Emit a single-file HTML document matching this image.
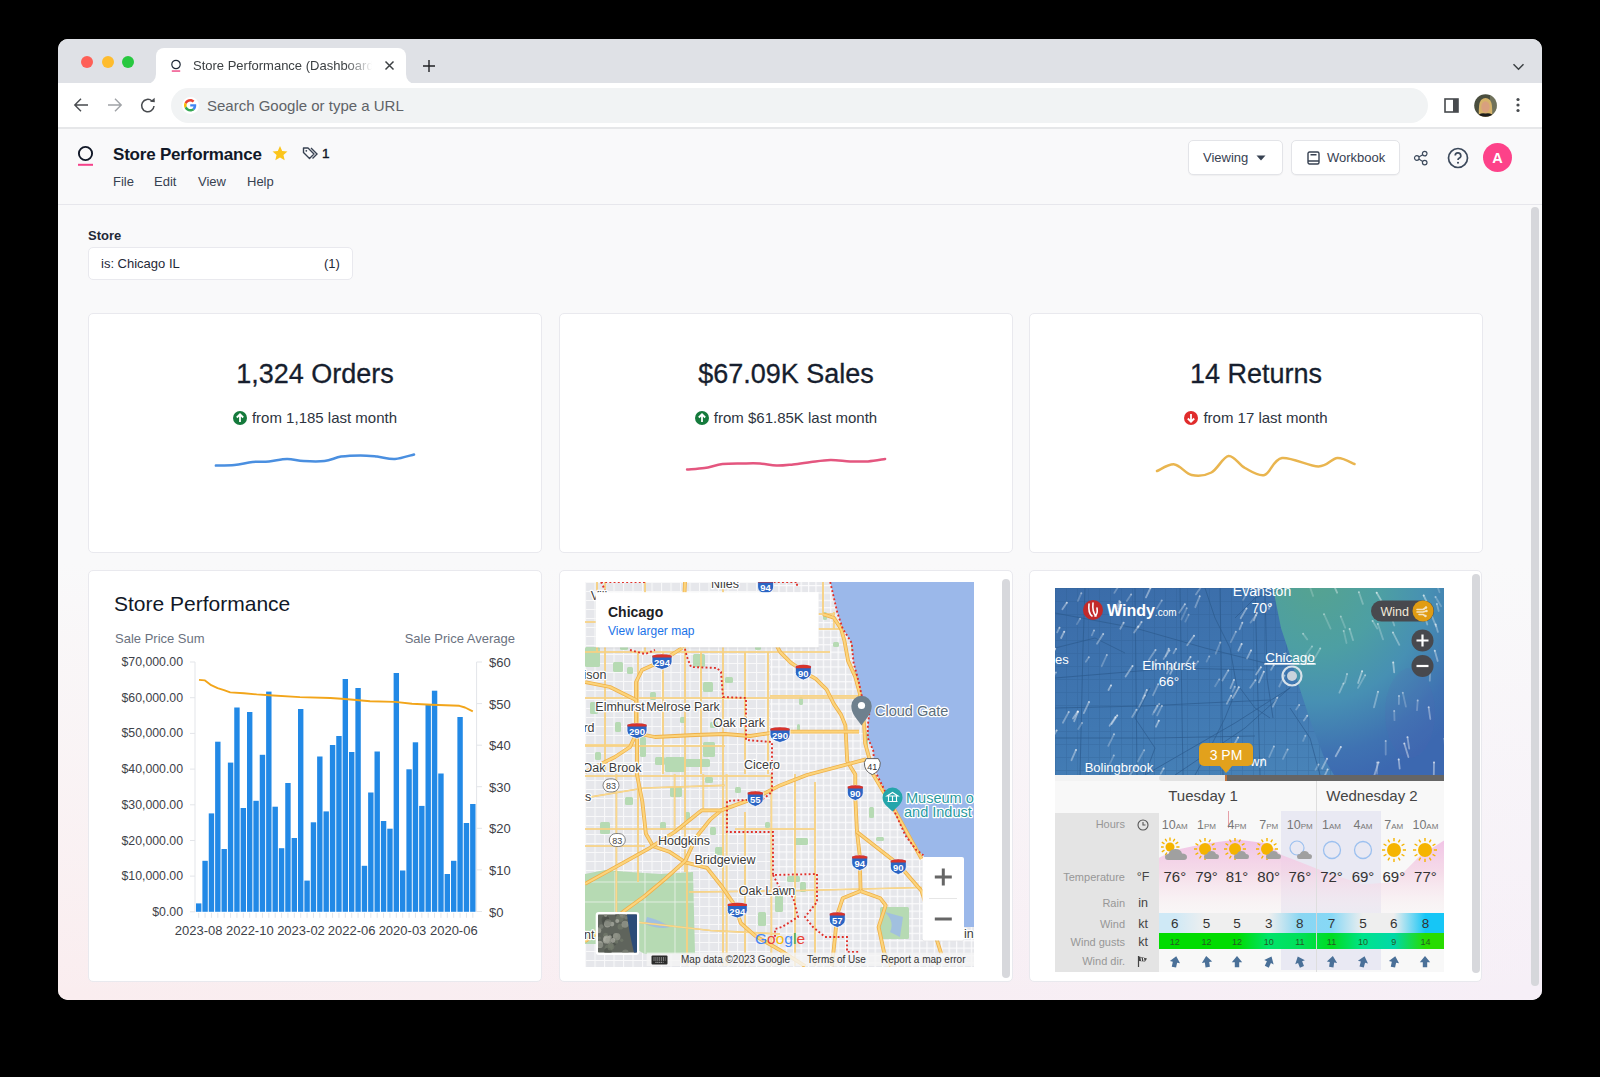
<!DOCTYPE html>
<html><head><meta charset="utf-8">
<style>
*{box-sizing:border-box;margin:0;padding:0}
html,body{width:1600px;height:1077px;overflow:hidden;background:#000;font-family:"Liberation Sans",sans-serif}
.a{position:absolute}
.win{left:58px;top:39px;width:1484px;height:961px;border-radius:10px;overflow:hidden;background:#f9f9fa}
.tabbar{left:0;top:0;width:1484px;height:44px;background:#dfe1e6}
.toolbar{left:0;top:44px;width:1484px;height:45px;background:#fff}
.sep{left:0;top:88px;width:1484px;height:2px;background:#e6e7e9}
.hdr{left:0;top:90px;width:1484px;height:76px;background:#f9f9fa;border-bottom:1px solid #e7e7ec}
.content{left:0;top:167px;width:1484px;height:794px;background:linear-gradient(180deg,rgba(249,249,250,1) 0%,rgba(249,249,250,1) 45%,rgba(249,249,250,0) 100%),linear-gradient(90deg,#faedef,#f6eff7)}
.dot{width:12px;height:12px;border-radius:50%}
.txt{white-space:nowrap}
.card{background:#fff;border:1px solid #e9e9ee;border-radius:5px}
</style></head><body>
<div class="a win">
  <div class="a tabbar"></div>
  <div class="a toolbar"></div>
  <div class="a sep"></div>
  <div class="a hdr"></div>
  <div class="a content"></div>
</div>

<!-- traffic lights -->
<div class="a dot" style="left:81px;top:56px;background:#fe5f57"></div>
<div class="a dot" style="left:102px;top:56px;background:#febc2e"></div>
<div class="a dot" style="left:122px;top:56px;background:#28c840"></div>

<!-- tab -->
<div class="a" style="left:156px;top:48px;width:250px;height:36px;background:#fff;border-radius:8px 8px 0 0"></div>
<svg class="a" style="left:147px;top:74px" width="9" height="10"><path d="M0 10 A9 10 0 0 0 9 0 L9 10 Z" fill="#fff"/></svg>
<svg class="a" style="left:406px;top:74px" width="9" height="10"><path d="M9 10 A9 10 0 0 1 0 0 L0 10 Z" fill="#fff"/></svg>
<svg class="a" style="left:170px;top:57px" width="12" height="16"><circle cx="6" cy="7.5" r="4.2" fill="none" stroke="#1f2937" stroke-width="1.2"/><rect x="1.8" y="13.3" width="8.4" height="1.5" fill="#f0508a"/></svg>
<div class="a txt" style="left:193px;top:58px;font-size:13px;color:#3c4043;width:181px;overflow:hidden;-webkit-mask-image:linear-gradient(90deg,#000 84%,transparent 99%)">Store Performance (Dashboard)</div>
<svg class="a" style="left:384px;top:60px" width="11" height="11"><path d="M1.5 1.5L9.5 9.5M9.5 1.5L1.5 9.5" stroke="#3c4043" stroke-width="1.5"/></svg>
<svg class="a" style="left:422px;top:59px" width="14" height="14"><path d="M7 1V13M1 7H13" stroke="#202124" stroke-width="1.4"/></svg>
<svg class="a" style="left:1512px;top:62.5px" width="13" height="8"><path d="M1.5 1.2L6.5 6.2L11.5 1.2" fill="none" stroke="#3c4043" stroke-width="1.5"/></svg>

<!-- toolbar icons -->
<svg class="a" style="left:73px;top:97px" width="18" height="16"><path d="M15 8H2M8 1.8L1.8 8L8 14.2" fill="none" stroke="#474a4e" stroke-width="1.4"/></svg>
<svg class="a" style="left:106px;top:97px" width="18" height="16"><path d="M2 8H15M9 1.8L15.2 8L9 14.2" fill="none" stroke="#a0a3a7" stroke-width="1.4"/></svg>
<svg class="a" style="left:140px;top:97px" width="17" height="17"><path d="M14 9A6.2 6.2 0 1 1 12 4" fill="none" stroke="#474a4e" stroke-width="1.5"/><path d="M10 4.8L14.8 5.2L14.6 0.8Z" fill="#474a4e"/></svg>
<div class="a" style="left:171px;top:88px;width:1257px;height:35px;border-radius:18px;background:#f1f3f4"></div>
<div class="a" style="left:181.5px;top:96.5px;width:17px;height:17px;border-radius:50%;background:#fff"></div><svg class="a" style="left:184px;top:99px" width="12.5" height="12.5" viewBox="0 0 48 48"><path fill="#EA4335" d="M24 9.5c3.54 0 6.71 1.22 9.21 3.6l6.85-6.85C35.9 2.38 30.47 0 24 0 14.62 0 6.51 5.38 2.56 13.22l7.98 6.19C12.43 13.72 17.74 9.5 24 9.5z"/><path fill="#4285F4" d="M46.98 24.55c0-1.57-.15-3.09-.38-4.55H24v9.02h12.94c-.58 2.96-2.26 5.48-4.78 7.18l7.73 6c4.51-4.18 7.09-10.36 7.09-17.65z"/><path fill="#FBBC05" d="M10.53 28.59c-.48-1.45-.76-2.99-.76-4.59s.27-3.14.76-4.59l-7.98-6.19C.92 16.46 0 20.12 0 24c0 3.88.92 7.54 2.56 10.78l7.97-6.19z"/><path fill="#34A853" d="M24 48c6.48 0 11.93-2.13 15.89-5.81l-7.73-6c-2.15 1.45-4.92 2.3-8.16 2.3-6.26 0-11.57-4.22-13.47-9.91l-7.98 6.19C6.51 42.62 14.62 48 24 48z"/></svg>
<div class="a txt" style="left:207px;top:97px;font-size:15px;color:#5f6368">Search Google or type a URL</div>
<svg class="a" style="left:1444px;top:98px" width="15" height="15"><rect x="1" y="1" width="13" height="13" fill="none" stroke="#474a4e" stroke-width="1.6"/><rect x="9" y="1" width="5" height="13" fill="#474a4e"/></svg>
<svg class="a" style="left:1473.5px;top:94px" width="23" height="23"><defs><clipPath id="avc"><circle cx="11.5" cy="11.5" r="11.3"/></clipPath></defs><g clip-path="url(#avc)"><rect width="23" height="23" fill="#4a4e3e"/><rect x="16" y="0" width="7" height="23" fill="#8a8a70" opacity="0.6"/><path d="M5 23 Q4 10 7 6 Q11.5 2 16 6 Q19 10 18 23Z" fill="#d6b36a"/><ellipse cx="11.5" cy="13" rx="4.2" ry="5.8" fill="#d9a07e"/><path d="M2 23 Q6 18 11.5 19.5 Q17 18 21 23Z" fill="#1c1c1c"/></g></svg>
<svg class="a" style="left:1515px;top:97px" width="6" height="16"><circle cx="3" cy="2.5" r="1.6" fill="#474a4e"/><circle cx="3" cy="8" r="1.6" fill="#474a4e"/><circle cx="3" cy="13.5" r="1.6" fill="#474a4e"/></svg>

<!-- app header -->
<svg class="a" style="left:76px;top:144px" width="20" height="24"><circle cx="9.5" cy="9.5" r="6.6" fill="none" stroke="#111827" stroke-width="1.9"/><rect x="2" y="19.8" width="15" height="2" fill="#f5428a"/></svg>
<div class="a txt" style="left:113px;top:145px;font-size:17px;font-weight:bold;letter-spacing:-0.2px;color:#111827">Store Performance</div>
<svg class="a" style="left:271px;top:145px" width="18" height="17" viewBox="0 0 24 24"><path d="M12 1.5l3.1 6.9 7.4.7-5.6 5 1.7 7.4L12 17.6l-6.6 3.9 1.7-7.4-5.6-5 7.4-.7z" fill="#fbc51b"/></svg>
<svg class="a" style="left:302px;top:146px" width="17" height="15" viewBox="0 0 17 15"><path d="M1.5 2V6.5L7.5 12.5L12 8L6 2Z" fill="none" stroke="#374151" stroke-width="1.4" stroke-linejoin="round"/><path d="M9 2L15 8L10.5 12.5" fill="none" stroke="#374151" stroke-width="1.4"/><circle cx="4.3" cy="4.8" r="0.9" fill="#374151"/></svg>
<div class="a txt" style="left:322px;top:146px;font-size:13.5px;color:#111827;-webkit-text-stroke:0.4px #111827">1</div>
<div class="a txt" style="left:113px;top:174px;font-size:13px;color:#374151">File</div>
<div class="a txt" style="left:154px;top:174px;font-size:13px;color:#374151">Edit</div>
<div class="a txt" style="left:198px;top:174px;font-size:13px;color:#374151">View</div>
<div class="a txt" style="left:247px;top:174px;font-size:13px;color:#374151">Help</div>

<div class="a" style="left:1188px;top:140px;width:95px;height:35px;background:#fff;border:1px solid #e3e4e8;border-radius:5px;box-shadow:0 1px 1px rgba(0,0,0,.04)"></div>
<div class="a txt" style="left:1203px;top:150px;font-size:13px;color:#374151">Viewing</div>
<svg class="a" style="left:1256px;top:155px" width="10" height="6"><path d="M0.5 0.5H9.5L5 5.5Z" fill="#374151"/></svg>
<div class="a" style="left:1291px;top:140px;width:109px;height:35px;background:#fff;border:1px solid #e3e4e8;border-radius:5px;box-shadow:0 1px 1px rgba(0,0,0,.04)"></div>
<svg class="a" style="left:1307px;top:151px" width="13" height="14"><rect x="1" y="1" width="11" height="12" rx="1.5" fill="none" stroke="#374151" stroke-width="1.4"/><path d="M3.5 3.8H9.5M1 10H12" stroke="#374151" stroke-width="1.4"/></svg>
<div class="a txt" style="left:1327px;top:150px;font-size:13px;color:#374151">Workbook</div>
<svg class="a" style="left:1412.5px;top:150px" width="16" height="16"><circle cx="3.8" cy="8" r="2.3" fill="none" stroke="#3d4a5c" stroke-width="1.2"/><circle cx="11.7" cy="3.6" r="2.3" fill="none" stroke="#3d4a5c" stroke-width="1.2"/><circle cx="11.7" cy="12.6" r="2.3" fill="none" stroke="#3d4a5c" stroke-width="1.2"/><path d="M5.8 6.9L9.7 4.7M5.8 9.1L9.7 11.4" stroke="#3d4a5c" stroke-width="1.2"/></svg>
<svg class="a" style="left:1447px;top:147px" width="22" height="22"><circle cx="11" cy="11" r="9.5" fill="none" stroke="#3d4a5c" stroke-width="1.7"/><path d="M8.2 8.5A2.8 2.8 0 1 1 12 11.2C11.2 11.6 11 12 11 13" fill="none" stroke="#3d4a5c" stroke-width="1.7"/><circle cx="11" cy="15.8" r="1.05" fill="#3d4a5c"/></svg>
<div class="a" style="left:1483px;top:143px;width:29px;height:29px;border-radius:50%;background:#fd4289;color:#fff;font-size:14.5px;font-weight:bold;text-align:center;line-height:30px">A</div>


<!-- filter -->
<div class="a txt" style="left:88px;top:228px;font-size:13px;font-weight:bold;color:#1f2937">Store</div>
<div class="a card" style="left:88px;top:247px;width:265px;height:33px;border-radius:5px"></div>
<div class="a txt" style="left:101px;top:256px;font-size:13px;color:#1f2937">is: Chicago IL</div>
<div class="a txt" style="left:324px;top:256px;font-size:13px;color:#1f2937">(1)</div>

<!-- KPI cards -->
<div class="a card" style="left:88px;top:313px;width:454px;height:240px"></div>
<div class="a card" style="left:559px;top:313px;width:454px;height:240px"></div>
<div class="a card" style="left:1029px;top:313px;width:454px;height:240px"></div>

<div class="a txt" style="left:88px;top:359px;width:454px;text-align:center;font-size:27px;color:#161e2e;-webkit-text-stroke:0.3px #161e2e">1,324 Orders</div>
<div class="a txt" style="left:559px;top:359px;width:454px;text-align:center;font-size:27px;color:#161e2e;-webkit-text-stroke:0.3px #161e2e">$67.09K Sales</div>
<div class="a txt" style="left:1029px;top:359px;width:454px;text-align:center;font-size:27px;color:#161e2e;-webkit-text-stroke:0.3px #161e2e">14 Returns</div>

<div class="a txt kpis" style="left:88px;top:409px;width:454px;text-align:center;font-size:15px;color:#2d3440"><svg width="14" height="14" style="vertical-align:-2px;margin-right:5px"><circle cx="7" cy="7" r="7" fill="#157a3c"/><path d="M7 11V3.5M3.8 6.5L7 3.3L10.2 6.5" fill="none" stroke="#fff" stroke-width="1.8"/></svg>from 1,185 last month</div>
<div class="a txt kpis" style="left:559px;top:409px;width:454px;text-align:center;font-size:15px;color:#2d3440"><svg width="14" height="14" style="vertical-align:-2px;margin-right:5px"><circle cx="7" cy="7" r="7" fill="#157a3c"/><path d="M7 11V3.5M3.8 6.5L7 3.3L10.2 6.5" fill="none" stroke="#fff" stroke-width="1.8"/></svg>from $61.85K last month</div>
<div class="a txt kpis" style="left:1029px;top:409px;width:454px;text-align:center;font-size:15px;color:#2d3440"><svg width="14" height="14" style="vertical-align:-2px;margin-right:5px"><circle cx="7" cy="7" r="7" fill="#e02c2c"/><path d="M7 3V10.5M3.8 7.5L7 10.7L10.2 7.5" fill="none" stroke="#fff" stroke-width="1.8"/></svg>from 17 last month</div>

<svg class="a" style="left:0;top:0" width="1600" height="600">
<path fill="none" stroke="#4a8fe0" stroke-width="2.5" stroke-linejoin="round" stroke-linecap="round" d="M215.9 465.6 C219.0 465.5 228.4 465.6 234.5 465.0 C240.6 464.4 246.8 462.6 252.5 462.0 C258.2 461.4 263.2 461.9 269.0 461.4 C274.8 460.9 281.2 459.1 287.0 459.0 C292.8 458.9 297.2 460.8 303.5 461.1 C309.8 461.5 318.2 461.9 324.5 461.1 C330.8 460.4 335.0 457.6 341.0 456.6 C347.0 455.7 354.5 455.4 360.5 455.4 C366.5 455.4 371.2 456.0 377.0 456.6 C382.8 457.2 388.8 459.4 395.0 459.0 C401.2 458.6 410.8 455.2 414.0 454.5"/>
<path fill="none" stroke="#e4567f" stroke-width="2.5" stroke-linejoin="round" stroke-linecap="round" d="M687.1 469.5 C690.0 469.2 698.6 468.9 704.5 468.0 C710.4 467.1 716.2 464.9 722.5 464.1 C728.8 463.4 735.8 463.6 742.0 463.5 C748.2 463.4 754.2 463.1 760.0 463.5 C765.8 463.9 771.0 465.5 776.5 465.6 C782.0 465.8 787.2 465.0 793.0 464.4 C798.8 463.8 804.8 462.8 811.0 462.0 C817.2 461.2 824.0 460.0 830.5 459.9 C837.0 459.8 843.8 461.1 850.0 461.4 C856.2 461.6 862.1 461.8 868.0 461.4 C873.9 461.0 882.2 459.4 885.1 459.0"/>
<path fill="none" stroke="#e9b54f" stroke-width="2.5" stroke-linejoin="round" stroke-linecap="round" d="M1157.0 471.0 C1159.9 469.9 1168.7 463.7 1174.5 464.4 C1180.3 465.1 1185.4 473.6 1191.6 475.0 C1197.8 476.4 1205.2 475.7 1211.4 472.5 C1217.6 469.3 1222.9 456.8 1228.5 456.0 C1234.1 455.2 1239.0 464.8 1245.0 468.0 C1251.0 471.2 1258.3 476.7 1264.5 475.0 C1270.7 473.3 1273.0 459.4 1282.0 458.0 C1291.0 456.6 1309.3 466.5 1318.5 466.5 C1327.7 466.5 1331.4 458.4 1337.4 458.0 C1343.4 457.6 1351.7 463.0 1354.5 464.0"/>
</svg>

<!-- chart card -->
<div class="a card" style="left:88px;top:570px;width:454px;height:412px"></div>
<div class="a txt" style="left:114px;top:592px;font-size:21px;color:#111827">Store Performance</div>
<div class="a txt" style="left:115px;top:631px;font-size:13px;color:#6b7280">Sale Price Sum</div>
<div class="a txt" style="left:315px;top:631px;width:200px;text-align:right;font-size:13px;color:#6b7280">Sale Price Average</div>
<div class="a yl" style="left:88px;top:655px;width:95px">
<div class="a txt" style="left:0;top:0.0px;width:95px;text-align:right;font-size:12.3px;color:#3d4148">$70,000.00</div><div class="a txt" style="left:0;top:35.7px;width:95px;text-align:right;font-size:12.3px;color:#3d4148">$60,000.00</div><div class="a txt" style="left:0;top:71.4px;width:95px;text-align:right;font-size:12.3px;color:#3d4148">$50,000.00</div><div class="a txt" style="left:0;top:107.1px;width:95px;text-align:right;font-size:12.3px;color:#3d4148">$40,000.00</div><div class="a txt" style="left:0;top:142.8px;width:95px;text-align:right;font-size:12.3px;color:#3d4148">$30,000.00</div><div class="a txt" style="left:0;top:178.5px;width:95px;text-align:right;font-size:12.3px;color:#3d4148">$20,000.00</div><div class="a txt" style="left:0;top:214.1px;width:95px;text-align:right;font-size:12.3px;color:#3d4148">$10,000.00</div><div class="a txt" style="left:0;top:249.8px;width:95px;text-align:right;font-size:12.3px;color:#3d4148">$0.00</div></div>
<div class="a txt" style="left:489px;top:655.0px;font-size:13px;color:#3d4148">$60</div><div class="a txt" style="left:489px;top:696.6px;font-size:13px;color:#3d4148">$50</div><div class="a txt" style="left:489px;top:738.2px;font-size:13px;color:#3d4148">$40</div><div class="a txt" style="left:489px;top:779.7px;font-size:13px;color:#3d4148">$30</div><div class="a txt" style="left:489px;top:821.3px;font-size:13px;color:#3d4148">$20</div><div class="a txt" style="left:489px;top:862.9px;font-size:13px;color:#3d4148">$10</div><div class="a txt" style="left:489px;top:904.5px;font-size:13px;color:#3d4148">$0</div>
<div class="a txt" style="left:168.6px;top:923px;width:60px;text-align:center;font-size:13px;color:#3d4148">2023-08</div><div class="a txt" style="left:219.8px;top:923px;width:60px;text-align:center;font-size:13px;color:#3d4148">2022-10</div><div class="a txt" style="left:271.0px;top:923px;width:60px;text-align:center;font-size:13px;color:#3d4148">2023-02</div><div class="a txt" style="left:321.6px;top:923px;width:60px;text-align:center;font-size:13px;color:#3d4148">2022-06</div><div class="a txt" style="left:372.5px;top:923px;width:60px;text-align:center;font-size:13px;color:#3d4148">2020-03</div><div class="a txt" style="left:423.8px;top:923px;width:60px;text-align:center;font-size:13px;color:#3d4148">2020-06</div>
<svg class="a" style="left:88px;top:570px" width="454" height="411">
<path d="M107 92V342M388.6 92V342M102 92.0H107M102 127.7H107M102 163.4H107M102 199.1H107M102 234.8H107M102 270.5H107M102 306.1H107M102 341.8H107M388.6 92.0H394M388.6 133.6H394M388.6 175.2H394M388.6 216.7H394M388.6 258.3H394M388.6 299.9H394M388.6 341.5H394" stroke="#e3e5e9" stroke-width="1" fill="none"/>
<path d="M110.70 342.8V347.8M117.07 342.8V347.8M123.45 342.8V347.8M129.82 342.8V347.8M136.20 342.8V347.8M142.57 342.8V347.8M148.95 342.8V347.8M155.32 342.8V347.8M161.70 342.8V347.8M168.07 342.8V347.8M174.45 342.8V347.8M180.82 342.8V347.8M187.20 342.8V347.8M193.57 342.8V347.8M199.95 342.8V347.8M206.32 342.8V347.8M212.70 342.8V347.8M219.07 342.8V347.8M225.45 342.8V347.8M231.82 342.8V347.8M238.20 342.8V347.8M244.57 342.8V347.8M250.95 342.8V347.8M257.32 342.8V347.8M263.70 342.8V347.8M270.07 342.8V347.8M276.45 342.8V347.8M282.82 342.8V347.8M289.20 342.8V347.8M295.57 342.8V347.8M301.95 342.8V347.8M308.32 342.8V347.8M314.70 342.8V347.8M321.07 342.8V347.8M327.45 342.8V347.8M333.82 342.8V347.8M340.20 342.8V347.8M346.57 342.8V347.8M352.95 342.8V347.8M359.32 342.8V347.8M365.70 342.8V347.8M372.07 342.8V347.8M378.45 342.8V347.8M384.82 342.8V347.8" stroke="#e3e5e9" stroke-width="1" fill="none"/>
<g fill="#2289e6"><rect x="108.00" y="333.4" width="5.4" height="8.4"/><rect x="114.38" y="290.8" width="5.4" height="51.0"/><rect x="120.75" y="243.4" width="5.4" height="98.4"/><rect x="127.12" y="171.7" width="5.4" height="170.1"/><rect x="133.50" y="279.0" width="5.4" height="62.8"/><rect x="139.88" y="192.6" width="5.4" height="149.2"/><rect x="146.25" y="137.5" width="5.4" height="204.3"/><rect x="152.62" y="238.0" width="5.4" height="103.8"/><rect x="159.00" y="142.0" width="5.4" height="199.8"/><rect x="165.38" y="230.8" width="5.4" height="111.0"/><rect x="171.75" y="184.8" width="5.4" height="157.0"/><rect x="178.12" y="121.6" width="5.4" height="220.2"/><rect x="184.50" y="236.7" width="5.4" height="105.1"/><rect x="190.88" y="278.2" width="5.4" height="63.6"/><rect x="197.25" y="213.0" width="5.4" height="128.8"/><rect x="203.62" y="268.0" width="5.4" height="73.8"/><rect x="210.00" y="139.0" width="5.4" height="202.8"/><rect x="216.38" y="310.6" width="5.4" height="31.2"/><rect x="222.75" y="252.3" width="5.4" height="89.5"/><rect x="229.12" y="186.5" width="5.4" height="155.3"/><rect x="235.50" y="241.4" width="5.4" height="100.4"/><rect x="241.88" y="175.0" width="5.4" height="166.8"/><rect x="248.25" y="166.0" width="5.4" height="175.8"/><rect x="254.62" y="109.0" width="5.4" height="232.8"/><rect x="261.00" y="182.0" width="5.4" height="159.8"/><rect x="267.38" y="118.0" width="5.4" height="223.8"/><rect x="273.75" y="295.8" width="5.4" height="46.0"/><rect x="280.12" y="222.5" width="5.4" height="119.3"/><rect x="286.50" y="181.5" width="5.4" height="160.3"/><rect x="292.88" y="251.0" width="5.4" height="90.8"/><rect x="299.25" y="258.7" width="5.4" height="83.1"/><rect x="305.62" y="103.0" width="5.4" height="238.8"/><rect x="312.00" y="300.5" width="5.4" height="41.3"/><rect x="318.38" y="199.3" width="5.4" height="142.5"/><rect x="324.75" y="172.3" width="5.4" height="169.5"/><rect x="331.12" y="235.9" width="5.4" height="105.9"/><rect x="337.50" y="134.7" width="5.4" height="207.1"/><rect x="343.88" y="120.7" width="5.4" height="221.1"/><rect x="350.25" y="203.5" width="5.4" height="138.3"/><rect x="356.62" y="304.0" width="5.4" height="37.8"/><rect x="363.00" y="290.8" width="5.4" height="51.0"/><rect x="369.38" y="147.0" width="5.4" height="194.8"/><rect x="375.75" y="253.0" width="5.4" height="88.8"/><rect x="382.12" y="234.0" width="5.4" height="107.8"/></g>
<polyline fill="none" stroke="#f2a51a" stroke-width="1.9" stroke-linejoin="round" points="111,109.9 117,110.4 123.2,115.2 129.6,118.2 136,120.2 142.2,122.4 156,123.2 168.7,124.4 181.2,125.2 211.9,127.1 242.5,128 257,129 282,131.3 307,131.9 324,133.8 343.5,134.7 371.4,135.8 377,137.5 384.8,141.4"/>
</svg>

<!--CARDS-->
<div class="a card" style="left:559px;top:570px;width:454px;height:412px"></div>
<div class="a" style="left:1002px;top:579px;width:8px;height:399px;border-radius:4px;background:#d7d8dc"></div>
<div class="a card" style="left:1029px;top:570px;width:453px;height:412px"></div>
<div class="a" style="left:1472px;top:574px;width:8px;height:399px;border-radius:4px;background:#d7d8dc"></div>
<div class="a" style="left:1531px;top:207px;width:8px;height:779px;border-radius:4px;background:#d6d7db"></div>

<!--/CARDS-->
<!--MAPSVG-->
<svg class="a" style="left:585px;top:582px" width="389" height="385" viewBox="0 0 389 385">
<defs><pattern id="grid" x="1" y="3" width="7.4" height="7.4" patternUnits="userSpaceOnUse"><path d="M0 0.6H7.4M0.6 0V7.4" stroke="#fbfbfc" stroke-width="1.2"/></pattern><pattern id="grid2" width="9.5" height="9" patternUnits="userSpaceOnUse"><path d="M0 0.5H9.5M0.5 0V9" stroke="#fafafb" stroke-width="1.1"/></pattern></defs>
<rect width="389" height="385" fill="#e6e7eb"/>
<rect x="0" y="0" width="185" height="385" fill="url(#grid2)" opacity="0.9"/>
<rect x="185" y="0" width="204" height="385" fill="url(#grid)"/>
<path d="M0 292 L20 288 L45 290 L75 292 L108 290 L110 372 L60 372 L40 362 L0 362Z" fill="#b6dab3"/>
<path d="M0 300H110M0 320H110M60 290V372M30 290V372M90 290V372" stroke="#f3f5f3" stroke-width="0.9" opacity="0.8"/>
<rect x="108" y="72" width="12" height="13" rx="1.5" fill="#b6dab3"/>
<rect x="0" y="65" width="15" height="20" rx="1.5" fill="#b6dab3"/>
<rect x="28" y="80" width="10" height="10" rx="1.5" fill="#b6dab3"/>
<rect x="42" y="85" width="6" height="7" rx="1.5" fill="#b6dab3"/>
<rect x="118" y="100" width="10" height="10" rx="1.5" fill="#b6dab3"/>
<rect x="55" y="155" width="6" height="20" rx="1.5" fill="#b6dab3"/>
<rect x="118" y="160" width="12" height="15" rx="1.5" fill="#b6dab3"/>
<rect x="80" y="175" width="20" height="15" rx="1.5" fill="#b6dab3"/>
<rect x="100" y="177" width="25" height="8" rx="1.5" fill="#b6dab3"/>
<rect x="209" y="256" width="14" height="7" rx="1.5" fill="#b6dab3"/>
<rect x="284" y="225" width="5" height="11" rx="1.5" fill="#b6dab3"/>
<rect x="291" y="255" width="8" height="4" rx="1.5" fill="#b6dab3"/>
<rect x="202" y="294" width="13" height="6" rx="1.5" fill="#b6dab3"/>
<rect x="295" y="325" width="29" height="32" rx="1.5" fill="#b6dab3"/>
<rect x="238" y="30" width="4" height="8" rx="1.5" fill="#b6dab3"/>
<rect x="248" y="60" width="6" height="5" rx="1.5" fill="#b6dab3"/>
<rect x="214" y="115" width="4" height="8" rx="1.5" fill="#b6dab3"/>
<rect x="212" y="142" width="3" height="8" rx="1.5" fill="#b6dab3"/>
<rect x="266" y="60" width="5" height="10" rx="1.5" fill="#b6dab3"/>
<rect x="270" y="85" width="4" height="16" rx="1.5" fill="#b6dab3"/>
<rect x="280" y="150" width="3" height="15" rx="1.5" fill="#b6dab3"/>
<rect x="100" y="230" width="5" height="8" rx="1.5" fill="#b6dab3"/>
<rect x="150" y="205" width="6" height="6" rx="1.5" fill="#b6dab3"/>
<rect x="5" y="120" width="8" height="12" rx="1.5" fill="#b6dab3"/>
<rect x="30" y="140" width="6" height="10" rx="1.5" fill="#b6dab3"/>
<rect x="70" y="175" width="10" height="8" rx="1.5" fill="#b6dab3"/>
<rect x="40" y="215" width="8" height="8" rx="1.5" fill="#b6dab3"/>
<rect x="85" y="205" width="12" height="10" rx="1.5" fill="#b6dab3"/>
<rect x="120" y="195" width="8" height="6" rx="1.5" fill="#b6dab3"/>
<rect x="15" y="240" width="10" height="12" rx="1.5" fill="#b6dab3"/>
<rect x="75" y="240" width="6" height="8" rx="1.5" fill="#b6dab3"/>
<rect x="130" y="265" width="8" height="8" rx="1.5" fill="#b6dab3"/>
<rect x="10" y="170" width="6" height="8" rx="1.5" fill="#b6dab3"/>
<rect x="140" y="95" width="8" height="6" rx="1.5" fill="#b6dab3"/>
<rect x="65" y="110" width="6" height="8" rx="1.5" fill="#b6dab3"/>
<rect x="35" y="60" width="8" height="8" rx="1.5" fill="#b6dab3"/>
<rect x="95" y="135" width="6" height="6" rx="1.5" fill="#b6dab3"/>
<rect x="125" y="140" width="8" height="6" rx="1.5" fill="#b6dab3"/>
<rect x="170" y="60" width="6" height="8" rx="1.5" fill="#b6dab3"/>
<rect x="180" y="240" width="5" height="6" rx="1.5" fill="#b6dab3"/>
<rect x="125" y="245" width="6" height="8" rx="1.5" fill="#b6dab3"/>
<rect x="173" y="330" width="8" height="14" rx="1.5" fill="#b6dab3"/>
<rect x="190" y="310" width="8" height="20" rx="1.5" fill="#b6dab3"/>
<rect x="215" y="300" width="6" height="10" rx="1.5" fill="#b6dab3"/>
<path d="M62 335 Q75 338 85 345 Q75 348 60 342Z M300 330 Q310 340 305 350 L315 355 L318 335Z" fill="#9cb9ea" opacity="0.8"/>
<polygon fill="#9bb8ea" points="245.2,0 252.3,30.5 257.7,46.6 266.7,61 268.5,80.6 273.9,100.4 276.5,112.9 284.6,129 282.8,143.4 282.8,155.9 288.2,168.5 289,179.2 291.8,192.6 302.5,214.1 311.5,233.8 320.4,253.5 331.2,267.9 338.4,273.2 345,290 372,345 389,345 389,0"/>
<path d="M0 70H245" stroke="#f3c66f" stroke-width="1.7" fill="none"/>
<path d="M0 70H245" stroke="#fbdc95" stroke-width="0.9" fill="none"/>
<path d="M0 116H275" stroke="#f3c66f" stroke-width="1.7" fill="none"/>
<path d="M0 116H275" stroke="#fbdc95" stroke-width="0.9" fill="none"/>
<path d="M0 163H52" stroke="#f3c66f" stroke-width="1.7" fill="none"/>
<path d="M0 163H52" stroke="#fbdc95" stroke-width="0.9" fill="none"/>
<path d="M185 113.8H276" stroke="#f3c66f" stroke-width="1.7" fill="none"/>
<path d="M185 113.8H276" stroke="#fbdc95" stroke-width="0.9" fill="none"/>
<path d="M220 47H258" stroke="#f3c66f" stroke-width="1.7" fill="none"/>
<path d="M220 47H258" stroke="#fbdc95" stroke-width="0.9" fill="none"/>
<path d="M220 32H250" stroke="#f3c66f" stroke-width="1.7" fill="none"/>
<path d="M220 32H250" stroke="#fbdc95" stroke-width="0.9" fill="none"/>
<path d="M20 0V190" stroke="#f3c66f" stroke-width="1.7" fill="none"/>
<path d="M20 0V190" stroke="#fbdc95" stroke-width="0.9" fill="none"/>
<path d="M78 70V192" stroke="#f3c66f" stroke-width="1.7" fill="none"/>
<path d="M78 70V192" stroke="#fbdc95" stroke-width="0.9" fill="none"/>
<path d="M116 70V192" stroke="#f3c66f" stroke-width="1.7" fill="none"/>
<path d="M116 70V192" stroke="#fbdc95" stroke-width="0.9" fill="none"/>
<path d="M138 0V384" stroke="#f3c66f" stroke-width="1.7" fill="none"/>
<path d="M138 0V384" stroke="#fbdc95" stroke-width="0.9" fill="none"/>
<path d="M183 70V192" stroke="#f3c66f" stroke-width="1.7" fill="none"/>
<path d="M183 70V192" stroke="#fbdc95" stroke-width="0.9" fill="none"/>
<path d="M186.4 192V384" stroke="#f3c66f" stroke-width="1.7" fill="none"/>
<path d="M186.4 192V384" stroke="#fbdc95" stroke-width="0.9" fill="none"/>
<path d="M141.6 192V384" stroke="#f3c66f" stroke-width="1.7" fill="none"/>
<path d="M141.6 192V384" stroke="#fbdc95" stroke-width="0.9" fill="none"/>
<path d="M31.4 192V330" stroke="#f3c66f" stroke-width="1.7" fill="none"/>
<path d="M31.4 192V330" stroke="#fbdc95" stroke-width="0.9" fill="none"/>
<path d="M89.6 192V250" stroke="#f3c66f" stroke-width="1.7" fill="none"/>
<path d="M89.6 192V250" stroke="#fbdc95" stroke-width="0.9" fill="none"/>
<path d="M102 280V384" stroke="#f3c66f" stroke-width="1.7" fill="none"/>
<path d="M102 280V384" stroke="#fbdc95" stroke-width="0.9" fill="none"/>
<path d="M118.3 192V230" stroke="#f3c66f" stroke-width="1.7" fill="none"/>
<path d="M118.3 192V230" stroke="#fbdc95" stroke-width="0.9" fill="none"/>
<path d="M0 215.9 L59.1 206 L139.8 203.4" stroke="#f3c66f" stroke-width="1.7" fill="none"/>
<path d="M0 215.9 L59.1 206 L139.8 203.4" stroke="#fbdc95" stroke-width="0.9" fill="none"/>
<path d="M53 70V300" stroke="#f3c66f" stroke-width="1.7" fill="none"/>
<path d="M53 70V300" stroke="#fbdc95" stroke-width="0.9" fill="none"/>
<path d="M100 0V290" stroke="#f3c66f" stroke-width="1.7" fill="none"/>
<path d="M100 0V290" stroke="#fbdc95" stroke-width="0.9" fill="none"/>
<path d="M160 70V192" stroke="#f3c66f" stroke-width="1.7" fill="none"/>
<path d="M160 70V192" stroke="#fbdc95" stroke-width="0.9" fill="none"/>
<path d="M0 164H140" stroke="#f3c66f" stroke-width="1.7" fill="none"/>
<path d="M0 164H140" stroke="#fbdc95" stroke-width="0.9" fill="none"/>
<path d="M0 194H185" stroke="#f3c66f" stroke-width="1.7" fill="none"/>
<path d="M0 194H185" stroke="#fbdc95" stroke-width="0.9" fill="none"/>
<path d="M0 247H120" stroke="#f3c66f" stroke-width="1.7" fill="none"/>
<path d="M0 247H120" stroke="#fbdc95" stroke-width="0.9" fill="none"/>
<path d="M150 247H230" stroke="#f3c66f" stroke-width="1.7" fill="none"/>
<path d="M150 247H230" stroke="#fbdc95" stroke-width="0.9" fill="none"/>
<path d="M230 200V384" stroke="#f3c66f" stroke-width="1.7" fill="none"/>
<path d="M230 200V384" stroke="#fbdc95" stroke-width="0.9" fill="none"/>
<path d="M0 264H60" stroke="#f3c66f" stroke-width="1.7" fill="none"/>
<path d="M0 264H60" stroke="#fbdc95" stroke-width="0.9" fill="none"/>
<path d="M12 0V70" stroke="#f3c66f" stroke-width="1.7" fill="none"/>
<path d="M12 0V70" stroke="#fbdc95" stroke-width="0.9" fill="none"/>
<path d="M0 40H100" stroke="#f3c66f" stroke-width="1.7" fill="none"/>
<path d="M0 40H100" stroke="#fbdc95" stroke-width="0.9" fill="none"/>
<path d="M60 0V70" stroke="#f3c66f" stroke-width="1.7" fill="none"/>
<path d="M60 0V70" stroke="#fbdc95" stroke-width="0.9" fill="none"/>
<path d="M160 230V384" stroke="#f3c66f" stroke-width="1.7" fill="none"/>
<path d="M160 230V384" stroke="#fbdc95" stroke-width="0.9" fill="none"/>
<path d="M210 192V384" stroke="#f3c66f" stroke-width="1.7" fill="none"/>
<path d="M210 192V384" stroke="#fbdc95" stroke-width="0.9" fill="none"/>
<path d="M104 310 L195 309 L337 305.5" stroke="#f3c66f" stroke-width="1.7" fill="none"/>
<path d="M104 310 L195 309 L337 305.5" stroke="#fbdc95" stroke-width="0.9" fill="none"/>
<path d="M53.8 340.4 L125.4 348.5 L195 352" stroke="#f3c66f" stroke-width="1.7" fill="none"/>
<path d="M53.8 340.4 L125.4 348.5 L195 352" stroke="#fbdc95" stroke-width="0.9" fill="none"/>
<path d="M238 0V32" stroke="#f3c66f" stroke-width="1.7" fill="none"/>
<path d="M238 0V32" stroke="#fbdc95" stroke-width="0.9" fill="none"/>
<path d="M248.8 30V47" stroke="#f3c66f" stroke-width="1.7" fill="none"/>
<path d="M248.8 30V47" stroke="#fbdc95" stroke-width="0.9" fill="none"/>
<path d="M195 69.9 L205.8 80.6 L211.1 84.2 L218.3 89.6 L230.8 96.8 L241.6 107.5 L248.8 121.9 L256 132.6 L260.4 143.4 L261.3 161.3 L262.2 179.2 L270.3 192.6 L270.3 215.9 L272 250 L274.7 273.2 L275.6 309.1" stroke="#eeb04a" stroke-width="3.8" fill="none" stroke-linejoin="round"/>
<path d="M195 69.9 L205.8 80.6 L211.1 84.2 L218.3 89.6 L230.8 96.8 L241.6 107.5 L248.8 121.9 L256 132.6 L260.4 143.4 L261.3 161.3 L262.2 179.2 L270.3 192.6 L270.3 215.9 L272 250 L274.7 273.2 L275.6 309.1" stroke="#fcd47c" stroke-width="2.2" fill="none" stroke-linejoin="round"/>
<path d="M195 69.9 L180 40 L176 15 L180 0" stroke="#eeb04a" stroke-width="3.8" fill="none" stroke-linejoin="round"/>
<path d="M195 69.9 L180 40 L176 15 L180 0" stroke="#fcd47c" stroke-width="2.2" fill="none" stroke-linejoin="round"/>
<path d="M275.6 309.1 L257.7 316.3 L252.3 332.4 L247 384" stroke="#eeb04a" stroke-width="3.8" fill="none" stroke-linejoin="round"/>
<path d="M275.6 309.1 L257.7 316.3 L252.3 332.4 L247 384" stroke="#fcd47c" stroke-width="2.2" fill="none" stroke-linejoin="round"/>
<path d="M275.6 309.1 L295.4 316.3 L300.7 323.4 L293.6 345 L299 370 L306 384" stroke="#eeb04a" stroke-width="3.8" fill="none" stroke-linejoin="round"/>
<path d="M275.6 309.1 L295.4 316.3 L300.7 323.4 L293.6 345 L299 370 L306 384" stroke="#fcd47c" stroke-width="2.2" fill="none" stroke-linejoin="round"/>
<path d="M272 250 L313.3 282.2 L336.6 309.1 L356.3 372" stroke="#eeb04a" stroke-width="3.8" fill="none" stroke-linejoin="round"/>
<path d="M272 250 L313.3 282.2 L336.6 309.1 L356.3 372" stroke="#fcd47c" stroke-width="2.2" fill="none" stroke-linejoin="round"/>
<path d="M238 32.3 L248.8 35.8 L256 46.6 L259.5 59.1 L263.1 78.9 L270.3 95 L274.7 111.1 L279.2 143.4 L280.1 161.3 L284.6 177.4 L288.2 192.6 L309.7 228.4 L336.6 276.8" stroke="#eeb04a" stroke-width="3.8" fill="none" stroke-linejoin="round"/>
<path d="M238 32.3 L248.8 35.8 L256 46.6 L259.5 59.1 L263.1 78.9 L270.3 95 L274.7 111.1 L279.2 143.4 L280.1 161.3 L284.6 177.4 L288.2 192.6 L309.7 228.4 L336.6 276.8" stroke="#fcd47c" stroke-width="2.2" fill="none" stroke-linejoin="round"/>
<path d="M0 190 L30 175 L45 165 L52 150 L60 153 L70 155 L110 153 L140 152 L165 154 L195 149.6 L274 149.6" stroke="#eeb04a" stroke-width="3.8" fill="none" stroke-linejoin="round"/>
<path d="M0 190 L30 175 L45 165 L52 150 L60 153 L70 155 L110 153 L140 152 L165 154 L195 149.6 L274 149.6" stroke="#fcd47c" stroke-width="2.2" fill="none" stroke-linejoin="round"/>
<path d="M97 66 L77 79 L57 88 L51 100 L51 140 L52 150 L52 192.6 L57.3 219.5 L60.9 251.7 L68.1 264.3 L84.2 269.7 L100.4 280.4 L121.9 285.8 L136.2 303.7 L148.7 321.6 L155.9 341.3 L170.3 353.9 L195 368.2 L220 384" stroke="#eeb04a" stroke-width="3.8" fill="none" stroke-linejoin="round"/>
<path d="M97 66 L77 79 L57 88 L51 100 L51 140 L52 150 L52 192.6 L57.3 219.5 L60.9 251.7 L68.1 264.3 L84.2 269.7 L100.4 280.4 L121.9 285.8 L136.2 303.7 L148.7 321.6 L155.9 341.3 L170.3 353.9 L195 368.2 L220 384" stroke="#fcd47c" stroke-width="2.2" fill="none" stroke-linejoin="round"/>
<path d="M281 177.4 L221.9 193 L195 203.4 L170.3 215.9 L136.2 228.4 L125.4 237.4 L111.1 255.3 L100.4 278.6 L80.6 296.5 L59.1 314.5 L39.4 328.8 L17.9 346.7 L0 359.3" stroke="#eeb04a" stroke-width="3.8" fill="none" stroke-linejoin="round"/>
<path d="M281 177.4 L221.9 193 L195 203.4 L170.3 215.9 L136.2 228.4 L125.4 237.4 L111.1 255.3 L100.4 278.6 L80.6 296.5 L59.1 314.5 L39.4 328.8 L17.9 346.7 L0 359.3" stroke="#fcd47c" stroke-width="2.2" fill="none" stroke-linejoin="round"/>
<path d="M0 301.9 L35.8 282.2 L64.5 266.1 L89.6 250 L116.5 228.4 L136.2 228.4" stroke="#eeb04a" stroke-width="3.8" fill="none" stroke-linejoin="round"/>
<path d="M0 301.9 L35.8 282.2 L64.5 266.1 L89.6 250 L116.5 228.4 L136.2 228.4" stroke="#fcd47c" stroke-width="2.2" fill="none" stroke-linejoin="round"/>
<path d="M0 100 L25 105 L45 115 L51 118" stroke="#eeb04a" stroke-width="3.8" fill="none" stroke-linejoin="round"/>
<path d="M0 100 L25 105 L45 115 L51 118" stroke="#fcd47c" stroke-width="2.2" fill="none" stroke-linejoin="round"/>
<path d="M100 0 L97 66" stroke="#eeb04a" stroke-width="3.8" fill="none" stroke-linejoin="round"/>
<path d="M100 0 L97 66" stroke="#fcd47c" stroke-width="2.2" fill="none" stroke-linejoin="round"/>
<path d="M16 0 L62 0 M245.2 0 L252.3 30.5 L257.7 46.6 L266.7 61 L268.5 80.6 L273.9 100.4 L276.5 112.9 L284.6 129 L282.8 143.4 L282.8 155.9 L288.2 168.5 L289 179.2 L291.8 192.6 L302.5 214.1 L311.5 233.8 L320.4 253.5 L331.2 267.9 L338.4 273.2" stroke="#e0302a" stroke-width="1.9" stroke-dasharray="1.9 2.3" fill="none"/>
<path d="M16 0 L20 8 M45 68 L60 72 L70 68 M100 67 L102 75 L106 85 L132 86 L136 90 L138 115 L161 116 L161 158 L187 160 L187 210 L178 217 L142 219 L142 250 L188 250 L188 293 L232 292 L232 320 L220 335 L228 345 L240 355 L262 355 L262 370 L275 370" stroke="#e0302a" stroke-width="1.9" stroke-dasharray="1.9 2.3" fill="none"/>
<path d="M188 293 L197 310 L208 315 L213 335 L197 345 L190 347 L190 355" stroke="#e0302a" stroke-width="1.9" stroke-dasharray="1.9 2.3" fill="none"/>
<path d="M176 0 L212 0 L212 5" stroke="#e0302a" stroke-width="1.9" stroke-dasharray="1.9 2.3" fill="none"/>
<g transform="translate(67.0,71.0)"><path d="M0 2.5Q10.0 0 20 2.5V9Q20 14 10.0 16.5Q0 14 0 9Z" fill="#2b65c4" stroke="#fff" stroke-width="0.8"/><path d="M0.4 2.4Q10.0 0 19.6 2.4V4.6H0.4Z" fill="#d8332b"/><text x="10.0" y="13" font-size="9.5" font-weight="bold" fill="#fff" text-anchor="middle" font-family="Liberation Sans">294</text></g>
<g transform="translate(210.3,81.6)"><path d="M0 2.5Q8.0 0 16 2.5V9Q16 14 8.0 16.5Q0 14 0 9Z" fill="#2b65c4" stroke="#fff" stroke-width="0.8"/><path d="M0.4 2.4Q8.0 0 15.6 2.4V4.6H0.4Z" fill="#d8332b"/><text x="8.0" y="13" font-size="9.5" font-weight="bold" fill="#fff" text-anchor="middle" font-family="Liberation Sans">90</text></g>
<g transform="translate(42.0,140.0)"><path d="M0 2.5Q10.0 0 20 2.5V9Q20 14 10.0 16.5Q0 14 0 9Z" fill="#2b65c4" stroke="#fff" stroke-width="0.8"/><path d="M0.4 2.4Q10.0 0 19.6 2.4V4.6H0.4Z" fill="#d8332b"/><text x="10.0" y="13" font-size="9.5" font-weight="bold" fill="#fff" text-anchor="middle" font-family="Liberation Sans">290</text></g>
<g transform="translate(185.0,144.0)"><path d="M0 2.5Q10.0 0 20 2.5V9Q20 14 10.0 16.5Q0 14 0 9Z" fill="#2b65c4" stroke="#fff" stroke-width="0.8"/><path d="M0.4 2.4Q10.0 0 19.6 2.4V4.6H0.4Z" fill="#d8332b"/><text x="10.0" y="13" font-size="9.5" font-weight="bold" fill="#fff" text-anchor="middle" font-family="Liberation Sans">290</text></g>
<g transform="translate(162.3,208.0)"><path d="M0 2.5Q8.0 0 16 2.5V9Q16 14 8.0 16.5Q0 14 0 9Z" fill="#2b65c4" stroke="#fff" stroke-width="0.8"/><path d="M0.4 2.4Q8.0 0 15.6 2.4V4.6H0.4Z" fill="#d8332b"/><text x="8.0" y="13" font-size="9.5" font-weight="bold" fill="#fff" text-anchor="middle" font-family="Liberation Sans">55</text></g>
<g transform="translate(262.3,202.0)"><path d="M0 2.5Q8.0 0 16 2.5V9Q16 14 8.0 16.5Q0 14 0 9Z" fill="#2b65c4" stroke="#fff" stroke-width="0.8"/><path d="M0.4 2.4Q8.0 0 15.6 2.4V4.6H0.4Z" fill="#d8332b"/><text x="8.0" y="13" font-size="9.5" font-weight="bold" fill="#fff" text-anchor="middle" font-family="Liberation Sans">90</text></g>
<g transform="translate(266.7,272.0)"><path d="M0 2.5Q8.0 0 16 2.5V9Q16 14 8.0 16.5Q0 14 0 9Z" fill="#2b65c4" stroke="#fff" stroke-width="0.8"/><path d="M0.4 2.4Q8.0 0 15.6 2.4V4.6H0.4Z" fill="#d8332b"/><text x="8.0" y="13" font-size="9.5" font-weight="bold" fill="#fff" text-anchor="middle" font-family="Liberation Sans">94</text></g>
<g transform="translate(305.3,276.0)"><path d="M0 2.5Q8.0 0 16 2.5V9Q16 14 8.0 16.5Q0 14 0 9Z" fill="#2b65c4" stroke="#fff" stroke-width="0.8"/><path d="M0.4 2.4Q8.0 0 15.6 2.4V4.6H0.4Z" fill="#d8332b"/><text x="8.0" y="13" font-size="9.5" font-weight="bold" fill="#fff" text-anchor="middle" font-family="Liberation Sans">90</text></g>
<g transform="translate(142.3,319.5)"><path d="M0 2.5Q10.0 0 20 2.5V9Q20 14 10.0 16.5Q0 14 0 9Z" fill="#2b65c4" stroke="#fff" stroke-width="0.8"/><path d="M0.4 2.4Q10.0 0 19.6 2.4V4.6H0.4Z" fill="#d8332b"/><text x="10.0" y="13" font-size="9.5" font-weight="bold" fill="#fff" text-anchor="middle" font-family="Liberation Sans">294</text></g>
<g transform="translate(244.3,329.0)"><path d="M0 2.5Q8.0 0 16 2.5V9Q16 14 8.0 16.5Q0 14 0 9Z" fill="#2b65c4" stroke="#fff" stroke-width="0.8"/><path d="M0.4 2.4Q8.0 0 15.6 2.4V4.6H0.4Z" fill="#d8332b"/><text x="8.0" y="13" font-size="9.5" font-weight="bold" fill="#fff" text-anchor="middle" font-family="Liberation Sans">57</text></g>
<g transform="translate(172.6,-4.0)"><path d="M0 2.5Q8.0 0 16 2.5V9Q16 14 8.0 16.5Q0 14 0 9Z" fill="#2b65c4" stroke="#fff" stroke-width="0.8"/><path d="M0.4 2.4Q8.0 0 15.6 2.4V4.6H0.4Z" fill="#d8332b"/><text x="8.0" y="13" font-size="9.5" font-weight="bold" fill="#fff" text-anchor="middle" font-family="Liberation Sans">94</text></g>
<g transform="translate(279.3,175.6)"><path d="M2 1H14L16 5Q16 14 8 17Q0 14 0 5Z" fill="#fff" stroke="#555" stroke-width="0.9"/><text x="8" y="12.5" font-size="9" fill="#333" text-anchor="middle" font-family="Liberation Sans">41</text></g>
<rect x="18" y="196.9" width="16" height="13" rx="6.5" fill="#fff" stroke="#666" stroke-width="0.8"/><text x="26" y="206.9" font-size="9" fill="#444" text-anchor="middle" font-family="Liberation Sans">83</text>
<rect x="24.299999999999997" y="251.5" width="16" height="13" rx="6.5" fill="#fff" stroke="#666" stroke-width="0.8"/><text x="32.3" y="261.5" font-size="9" fill="#444" text-anchor="middle" font-family="Liberation Sans">83</text>
<text x="140" y="6" font-size="12.5" fill="#3c3c3c" text-anchor="middle" font-family="Liberation Sans" stroke="#fff" stroke-width="2.4" stroke-linejoin="round" paint-order="stroke">Niles</text>
<text x="10" y="97" font-size="12.5" fill="#3c3c3c" text-anchor="middle" font-family="Liberation Sans" stroke="#fff" stroke-width="2.4" stroke-linejoin="round" paint-order="stroke">ison</text>
<text x="35" y="129" font-size="12.5" fill="#3c3c3c" text-anchor="middle" font-family="Liberation Sans" stroke="#fff" stroke-width="2.4" stroke-linejoin="round" paint-order="stroke">Elmhurst</text>
<text x="98" y="129" font-size="12.5" fill="#3c3c3c" text-anchor="middle" font-family="Liberation Sans" stroke="#fff" stroke-width="2.4" stroke-linejoin="round" paint-order="stroke">Melrose Park</text>
<text x="154" y="145" font-size="12.5" fill="#3c3c3c" text-anchor="middle" font-family="Liberation Sans" stroke="#fff" stroke-width="2.4" stroke-linejoin="round" paint-order="stroke">Oak Park</text>
<text x="4" y="150" font-size="12.5" fill="#3c3c3c" text-anchor="middle" font-family="Liberation Sans" stroke="#fff" stroke-width="2.4" stroke-linejoin="round" paint-order="stroke">rd</text>
<text x="177" y="187" font-size="12.5" fill="#3c3c3c" text-anchor="middle" font-family="Liberation Sans" stroke="#fff" stroke-width="2.4" stroke-linejoin="round" paint-order="stroke">Cicero</text>
<text x="27" y="190" font-size="12.5" fill="#3c3c3c" text-anchor="middle" font-family="Liberation Sans" stroke="#fff" stroke-width="2.4" stroke-linejoin="round" paint-order="stroke">Oak Brook</text>
<text x="3" y="219" font-size="12.5" fill="#3c3c3c" text-anchor="middle" font-family="Liberation Sans" stroke="#fff" stroke-width="2.4" stroke-linejoin="round" paint-order="stroke">s</text>
<text x="99" y="263" font-size="12.5" fill="#3c3c3c" text-anchor="middle" font-family="Liberation Sans" stroke="#fff" stroke-width="2.4" stroke-linejoin="round" paint-order="stroke">Hodgkins</text>
<text x="140" y="282" font-size="12.5" fill="#3c3c3c" text-anchor="middle" font-family="Liberation Sans" stroke="#fff" stroke-width="2.4" stroke-linejoin="round" paint-order="stroke">Bridgeview</text>
<text x="182" y="313" font-size="12.5" fill="#3c3c3c" text-anchor="middle" font-family="Liberation Sans" stroke="#fff" stroke-width="2.4" stroke-linejoin="round" paint-order="stroke">Oak Lawn</text>
<text x="14" y="18" font-size="12.5" fill="#3c3c3c" text-anchor="middle" font-family="Liberation Sans" stroke="#fff" stroke-width="2.4" stroke-linejoin="round" paint-order="stroke">Vill</text>
<text x="290" y="134" font-size="14.5" fill="#5b6e7c" text-anchor="start" font-family="Liberation Sans" stroke="#fff" stroke-width="2.4" stroke-linejoin="round" paint-order="stroke">Cloud Gate</text>
<text x="321" y="221" font-size="14.5" fill="#2a9a9f" text-anchor="start" font-family="Liberation Sans" stroke="#fff" stroke-width="2.4" stroke-linejoin="round" paint-order="stroke">Museum o</text>
<text x="319" y="235" font-size="14.5" fill="#2a9a9f" text-anchor="start" font-family="Liberation Sans" stroke="#fff" stroke-width="2.4" stroke-linejoin="round" paint-order="stroke">and Indust</text>
<text x="379" y="356" font-size="12.5" fill="#3c3c3c" text-anchor="start" font-family="Liberation Sans" stroke="#fff" stroke-width="2.4" stroke-linejoin="round" paint-order="stroke">in</text>
<text x="-1" y="357" font-size="12.5" fill="#3c3c3c" text-anchor="start" font-family="Liberation Sans" stroke="#fff" stroke-width="2.4" stroke-linejoin="round" paint-order="stroke">nt</text>
<path d="M276.5 143.5 C272 137 266.3 132 266.3 124 A10.2 10.2 0 1 1 286.7 124 C286.7 132 281 137 276.5 143.5Z" fill="#6e808e"/><circle cx="276.5" cy="123.5" r="3.6" fill="#fff"/>
<g transform="translate(307.5,215.5)"><path d="M0 14 C-5 9 -10 6 -10 0 A10 10 0 1 1 10 0 C10 6 5 9 0 14Z" fill="#25a5ab"/><path d="M-5 4H5M-4 -1V4M4 -1V4M0 -1V4M-5.5 -1.5L0 -5L5.5 -1.5Z" stroke="#fff" stroke-width="1.1" fill="none"/></g>
<rect x="10.7" y="11.2" width="223" height="55.2" fill="#000" opacity="0.08"/>
<rect x="10.7" y="10.2" width="223" height="55.2" fill="#fff"/>
<text x="23" y="35" font-size="14" font-weight="bold" fill="#202124" font-family="Liberation Sans">Chicago</text>
<text x="23" y="52.5" font-size="12" fill="#1a73e8" font-family="Liberation Sans">View larger map</text>
<rect x="337.5" y="275.5" width="41.5" height="83" rx="2" fill="#000" opacity="0.06" transform="translate(0,1)"/>
<rect x="337.5" y="275" width="41.5" height="83.4" rx="2" fill="#fff"/>
<path d="M344 316.5H372" stroke="#e6e6e6" stroke-width="1"/>
<path d="M358.3 286.5V303.5M349.8 295H366.8" stroke="#666" stroke-width="3"/>
<path d="M349.8 337H366.8" stroke="#666" stroke-width="3"/>
<rect x="10.7" y="330" width="43.5" height="43" rx="3" fill="#fff"/>
<defs><clipPath id="thc"><rect x="13" y="332.3" width="39" height="38.4" rx="1"/></clipPath></defs>
<g clip-path="url(#thc)"><rect x="13" y="332.3" width="39" height="38.4" fill="#5f645c"/>
<circle cx="20.6" cy="353.2" r="2.4" fill="#737a6c" opacity="0.7"/>
<circle cx="28.2" cy="354.7" r="3.0" fill="#4a4f48" opacity="0.7"/>
<circle cx="21.3" cy="341.1" r="4.0" fill="#4a4f48" opacity="0.7"/>
<circle cx="30.3" cy="353.4" r="2.5" fill="#80847a" opacity="0.7"/>
<circle cx="20.4" cy="337.9" r="3.8" fill="#4a4f48" opacity="0.7"/>
<circle cx="36.7" cy="358.2" r="1.7" fill="#737a6c" opacity="0.7"/>
<circle cx="14.4" cy="362.4" r="3.6" fill="#b0b2a8" opacity="0.7"/>
<circle cx="28.1" cy="360.0" r="3.7" fill="#4a4f48" opacity="0.7"/>
<circle cx="25.6" cy="363.2" r="2.6" fill="#80847a" opacity="0.7"/>
<circle cx="41.1" cy="335.8" r="1.8" fill="#80847a" opacity="0.7"/>
<circle cx="21.3" cy="358.2" r="3.4" fill="#b0b2a8" opacity="0.7"/>
<circle cx="26.5" cy="364.5" r="2.9" fill="#737a6c" opacity="0.7"/>
<circle cx="31.7" cy="354.8" r="3.8" fill="#9a9d92" opacity="0.7"/>
<circle cx="40.4" cy="370.6" r="3.2" fill="#80847a" opacity="0.7"/>
<circle cx="35.4" cy="344.7" r="2.9" fill="#737a6c" opacity="0.7"/>
<circle cx="31.2" cy="359.8" r="2.0" fill="#737a6c" opacity="0.7"/>
<circle cx="21.5" cy="336.9" r="2.7" fill="#4a4f48" opacity="0.7"/>
<circle cx="15.8" cy="363.2" r="2.5" fill="#80847a" opacity="0.7"/>
<circle cx="13.6" cy="348.7" r="2.5" fill="#9a9d92" opacity="0.7"/>
<circle cx="14.4" cy="356.0" r="1.6" fill="#737a6c" opacity="0.7"/>
<circle cx="23.6" cy="366.4" r="4.0" fill="#737a6c" opacity="0.7"/>
<circle cx="20.6" cy="333.4" r="1.5" fill="#9a9d92" opacity="0.7"/>
<circle cx="32.2" cy="333.2" r="2.0" fill="#4a4f48" opacity="0.7"/>
<circle cx="22.3" cy="342.3" r="3.2" fill="#b0b2a8" opacity="0.7"/>
<circle cx="23.0" cy="369.4" r="3.7" fill="#4a4f48" opacity="0.7"/>
<circle cx="25.1" cy="365.9" r="2.5" fill="#737a6c" opacity="0.7"/>
<circle cx="34.8" cy="336.0" r="3.9" fill="#737a6c" opacity="0.7"/>
<circle cx="21.7" cy="356.7" r="3.3" fill="#b0b2a8" opacity="0.7"/>
<circle cx="27.0" cy="342.1" r="2.3" fill="#b0b2a8" opacity="0.7"/>
<circle cx="13.4" cy="348.2" r="2.9" fill="#9a9d92" opacity="0.7"/>
<circle cx="25.0" cy="355.0" r="1.8" fill="#b0b2a8" opacity="0.7"/>
<circle cx="27.9" cy="358.5" r="2.4" fill="#b0b2a8" opacity="0.7"/>
<circle cx="36.6" cy="332.9" r="1.7" fill="#9a9d92" opacity="0.7"/>
<circle cx="43.8" cy="341.8" r="2.6" fill="#737a6c" opacity="0.7"/>
<circle cx="32.2" cy="338.9" r="2.0" fill="#b0b2a8" opacity="0.7"/>
<circle cx="40.0" cy="342.3" r="3.5" fill="#9a9d92" opacity="0.7"/>
<circle cx="37.7" cy="333.0" r="2.9" fill="#80847a" opacity="0.7"/>
<circle cx="22.9" cy="340.7" r="3.5" fill="#80847a" opacity="0.7"/>
<circle cx="23.5" cy="358.4" r="3.1" fill="#9a9d92" opacity="0.7"/>
<circle cx="16.3" cy="344.6" r="2.3" fill="#80847a" opacity="0.7"/>
<path d="M42 332.3 L52 332.3 L52 370.7 L49 370.7 Q44 350 42 332.3Z" fill="#2c4c78"/></g>
<text x="170" y="362" font-size="15.5" font-family="Liberation Sans"><tspan fill="#4285f4">G</tspan><tspan fill="#ea4335">o</tspan><tspan fill="#fbbc05">o</tspan><tspan fill="#4285f4">g</tspan><tspan fill="#34a853">l</tspan><tspan fill="#ea4335">e</tspan></text>
<rect x="61.6" y="370.6" width="327.4" height="13.4" fill="#f5f5f5" opacity="0.8"/>
<g transform="translate(66.5,373.5)"><rect x="0" y="0" width="16" height="9" rx="1" fill="#2b2b2b"/><path d="M2 2.5H14M2 4.5H14M4 6.8H12" stroke="#fff" stroke-width="0.8" stroke-dasharray="1 0.9"/></g>
<text x="96" y="381" font-size="10" fill="#333" font-family="Liberation Sans">Map data ©2023 Google</text>
<text x="222" y="381" font-size="10" fill="#333" font-family="Liberation Sans">Terms of Use</text>
<text x="296" y="381" font-size="10" fill="#333" font-family="Liberation Sans">Report a map error</text>
</svg>
<!--/MAPSVG-->
<!--WINDYMAP-->
<svg class="a" style="left:1055px;top:588px" width="389" height="187" viewBox="0 0 389 187">
<defs>
<linearGradient id="wl" x1="0" y1="0" x2="0.6" y2="1"><stop offset="0" stop-color="#3a6ba8"/><stop offset="0.6" stop-color="#4078b2"/><stop offset="1" stop-color="#4883b8"/></linearGradient>
<radialGradient id="wk" cx="0.25" cy="-0.05" r="1.1"><stop offset="0" stop-color="#56a38f"/><stop offset="0.35" stop-color="#4d9fa3"/><stop offset="0.6" stop-color="#4790b3"/><stop offset="0.85" stop-color="#3f72b2"/><stop offset="1" stop-color="#3c68b0"/></radialGradient>
</defs>
<rect width="389" height="187" fill="url(#wl)"/>
<defs><pattern id="wg" width="11" height="13" patternUnits="userSpaceOnUse"><path d="M0 0.5H11M0.5 0V13" stroke="#2b5a8c" stroke-width="0.7"/></pattern></defs>
<rect x="0" y="0" width="389" height="187" fill="url(#wg)" opacity="0.35"/>
<polygon fill="url(#wk)" points="218,0 226,40 236,70 242,92 255,132 270,172 279,187 389,187 389,0"/>
<ellipse cx="355" cy="125" rx="25" ry="45" fill="#5a62b6" opacity="0.12"/>
<path d="M0 25 L80 40 L150 60 L210 75" stroke="#2b5a8c" stroke-width="0.9" fill="none" opacity="0.75"/>
<path d="M0 90 L60 85 L120 80 L200 82" stroke="#2b5a8c" stroke-width="0.9" fill="none" opacity="0.75"/>
<path d="M0 120 L90 118 L150 115 L215 112" stroke="#2b5a8c" stroke-width="0.9" fill="none" opacity="0.75"/>
<path d="M0 150 L100 150 L200 148" stroke="#2b5a8c" stroke-width="0.9" fill="none" opacity="0.75"/>
<path d="M30 0 L28 60 L25 187" stroke="#2b5a8c" stroke-width="0.9" fill="none" opacity="0.75"/>
<path d="M80 0 L82 187" stroke="#2b5a8c" stroke-width="0.9" fill="none" opacity="0.75"/>
<path d="M125 0 L128 187" stroke="#2b5a8c" stroke-width="0.9" fill="none" opacity="0.75"/>
<path d="M165 0 L168 187" stroke="#2b5a8c" stroke-width="0.9" fill="none" opacity="0.75"/>
<path d="M200 0 L205 187" stroke="#2b5a8c" stroke-width="0.9" fill="none" opacity="0.75"/>
<path d="M150 0 L160 30 L175 60 L182 100 L170 130 L155 160 L140 187" stroke="#2b5a8c" stroke-width="0.9" fill="none" opacity="0.75"/>
<path d="M95 100 L80 130 L100 160 L90 187" stroke="#2b5a8c" stroke-width="0.9" fill="none" opacity="0.75"/>
<path d="M120 187 L190 140 L240 95" stroke="#2b5a8c" stroke-width="0.9" fill="none" opacity="0.75"/>
<path d="M90 187 L180 135 L235 100" stroke="#2b5a8c" stroke-width="0.9" fill="none" opacity="0.75"/>
<path d="M0 60 L40 50 L70 65" stroke="#2b5a8c" stroke-width="0.9" fill="none" opacity="0.75"/>
<path d="M180 30 L200 10 L230 0" stroke="#2b5a8c" stroke-width="0.9" fill="none" opacity="0.75"/>
<path d="M185 100 L200 120 L215 130" stroke="#2b5a8c" stroke-width="0.9" fill="none" opacity="0.75"/>
<path d="M210 0 L212 90 L218 130" stroke="#2b5a8c" stroke-width="0.9" fill="none" opacity="0.75"/>
<path d="M235 120 L255 150 L265 187" stroke="#2b5a8c" stroke-width="0.9" fill="none" opacity="0.75"/>
<g stroke-linecap="round">
<path d="M124.2 24.7L129.9 16.3" stroke="#fff" stroke-width="1.8" opacity="0.31"/>
<circle cx="129.9" cy="16.3" r="1" fill="#fff" opacity="0.43"/>
<path d="M140.9 6.4L146.0 -1.0" stroke="#fff" stroke-width="1.8" opacity="0.28"/>
<circle cx="146.0" cy="-1.0" r="1" fill="#fff" opacity="0.40"/>
<path d="M22.9 12.9L26.3 5.2" stroke="#fff" stroke-width="1.8" opacity="0.21"/>
<circle cx="26.3" cy="5.2" r="1" fill="#fff" opacity="0.33"/>
<path d="M84.1 118.6L89.9 107.4" stroke="#fff" stroke-width="1.8" opacity="0.28"/>
<circle cx="89.9" cy="107.4" r="1" fill="#fff" opacity="0.40"/>
<path d="M384.5 4.2L379.3 -10.3" stroke="#fff" stroke-width="1.8" opacity="0.21"/>
<circle cx="379.3" cy="-10.3" r="1" fill="#fff" opacity="0.33"/>
<path d="M42.0 55.8L48.2 46.1" stroke="#fff" stroke-width="1.8" opacity="0.32"/>
<circle cx="48.2" cy="46.1" r="1" fill="#fff" opacity="0.44"/>
<path d="M249.9 68.4L257.0 58.4" stroke="#fff" stroke-width="1.8" opacity="0.19"/>
<circle cx="257.0" cy="58.4" r="1" fill="#fff" opacity="0.31"/>
<path d="M77.2 129.0L81.5 121.8" stroke="#fff" stroke-width="1.8" opacity="0.32"/>
<circle cx="81.5" cy="121.8" r="1" fill="#fff" opacity="0.44"/>
<path d="M175.8 54.1L180.8 43.8" stroke="#fff" stroke-width="1.8" opacity="0.24"/>
<circle cx="180.8" cy="43.8" r="1" fill="#fff" opacity="0.36"/>
<path d="M224.2 98.5L229.4 87.6" stroke="#fff" stroke-width="1.8" opacity="0.25"/>
<circle cx="229.4" cy="87.6" r="1" fill="#fff" opacity="0.37"/>
<path d="M386.1 18.3L380.5 9.0" stroke="#fff" stroke-width="1.8" opacity="0.22"/>
<circle cx="380.5" cy="9.0" r="1" fill="#fff" opacity="0.34"/>
<path d="M190.1 2.7L194.5 -6.6" stroke="#fff" stroke-width="1.8" opacity="0.32"/>
<circle cx="194.5" cy="-6.6" r="1" fill="#fff" opacity="0.44"/>
<path d="M344.3 56.8L338.0 44.6" stroke="#fff" stroke-width="1.8" opacity="0.32"/>
<circle cx="338.0" cy="44.6" r="1" fill="#fff" opacity="0.44"/>
<path d="M177.0 160.5L183.1 149.5" stroke="#fff" stroke-width="1.8" opacity="0.34"/>
<circle cx="183.1" cy="149.5" r="1" fill="#fff" opacity="0.46"/>
<path d="M19.2 133.2L23.0 123.8" stroke="#fff" stroke-width="1.8" opacity="0.38"/>
<circle cx="23.0" cy="123.8" r="1" fill="#fff" opacity="0.50"/>
<path d="M108.6 71.0L114.4 62.5" stroke="#fff" stroke-width="1.8" opacity="0.29"/>
<circle cx="114.4" cy="62.5" r="1" fill="#fff" opacity="0.41"/>
<path d="M62.1 18.1L64.4 13.1" stroke="#fff" stroke-width="1.8" opacity="0.21"/>
<circle cx="64.4" cy="13.1" r="1" fill="#fff" opacity="0.33"/>
<path d="M93.8 72.0L100.5 62.1" stroke="#fff" stroke-width="1.8" opacity="0.29"/>
<circle cx="100.5" cy="62.1" r="1" fill="#fff" opacity="0.41"/>
<path d="M214.2 169.0L218.9 158.5" stroke="#fff" stroke-width="1.8" opacity="0.25"/>
<circle cx="218.9" cy="158.5" r="1" fill="#fff" opacity="0.37"/>
<path d="M160.7 65.7L165.3 54.5" stroke="#fff" stroke-width="1.8" opacity="0.22"/>
<circle cx="165.3" cy="54.5" r="1" fill="#fff" opacity="0.34"/>
<path d="M65.3 40.7L68.6 34.7" stroke="#fff" stroke-width="1.8" opacity="0.32"/>
<circle cx="68.6" cy="34.7" r="1" fill="#fff" opacity="0.44"/>
<path d="M99.8 -4.2L104.0 -11.4" stroke="#fff" stroke-width="1.8" opacity="0.32"/>
<circle cx="104.0" cy="-11.4" r="1" fill="#fff" opacity="0.44"/>
<path d="M375.3 131.0L373.7 119.3" stroke="#fff" stroke-width="1.8" opacity="0.34"/>
<circle cx="373.7" cy="119.3" r="1" fill="#fff" opacity="0.46"/>
<path d="M16.5 172.2L21.0 161.9" stroke="#fff" stroke-width="1.8" opacity="0.37"/>
<circle cx="21.0" cy="161.9" r="1" fill="#fff" opacity="0.49"/>
<path d="M151.6 73.6L154.2 68.4" stroke="#fff" stroke-width="1.8" opacity="0.19"/>
<circle cx="154.2" cy="68.4" r="1" fill="#fff" opacity="0.31"/>
<path d="M21.9 36.1L25.1 30.7" stroke="#fff" stroke-width="1.8" opacity="0.19"/>
<circle cx="25.1" cy="30.7" r="1" fill="#fff" opacity="0.31"/>
<path d="M-4.9 24.8L-2.0 19.8" stroke="#fff" stroke-width="1.8" opacity="0.19"/>
<circle cx="-2.0" cy="19.8" r="1" fill="#fff" opacity="0.31"/>
<path d="M343.9 116.0L344.0 107.9" stroke="#fff" stroke-width="1.8" opacity="0.26"/>
<circle cx="344.0" cy="107.9" r="1" fill="#fff" opacity="0.38"/>
<path d="M140.3 19.2L144.7 8.3" stroke="#fff" stroke-width="1.8" opacity="0.29"/>
<circle cx="144.7" cy="8.3" r="1" fill="#fff" opacity="0.41"/>
<path d="M188.1 11.9L191.0 6.9" stroke="#fff" stroke-width="1.8" opacity="0.24"/>
<circle cx="191.0" cy="6.9" r="1" fill="#fff" opacity="0.36"/>
<path d="M325.7 26.8L321.8 21.3" stroke="#fff" stroke-width="1.8" opacity="0.31"/>
<circle cx="321.8" cy="21.3" r="1" fill="#fff" opacity="0.43"/>
<path d="M53.5 102.0L56.0 97.4" stroke="#fff" stroke-width="1.8" opacity="0.41"/>
<circle cx="56.0" cy="97.4" r="1" fill="#fff" opacity="0.53"/>
<path d="M339.5 132.2L339.2 122.9" stroke="#fff" stroke-width="1.8" opacity="0.22"/>
<circle cx="339.2" cy="122.9" r="1" fill="#fff" opacity="0.34"/>
<path d="M303.0 99.9L310.1 87.2" stroke="#fff" stroke-width="1.8" opacity="0.23"/>
<circle cx="310.1" cy="87.2" r="1" fill="#fff" opacity="0.35"/>
<path d="M318.8 189.0L323.5 174.4" stroke="#fff" stroke-width="1.8" opacity="0.38"/>
<circle cx="323.5" cy="174.4" r="1" fill="#fff" opacity="0.50"/>
<path d="M290.2 39.7L285.8 28.6" stroke="#fff" stroke-width="1.8" opacity="0.19"/>
<circle cx="285.8" cy="28.6" r="1" fill="#fff" opacity="0.31"/>
<path d="M6.1 50.0L9.2 43.7" stroke="#fff" stroke-width="1.8" opacity="0.41"/>
<circle cx="9.2" cy="43.7" r="1" fill="#fff" opacity="0.53"/>
<path d="M173.4 179.6L178.4 167.7" stroke="#fff" stroke-width="1.8" opacity="0.27"/>
<circle cx="178.4" cy="167.7" r="1" fill="#fff" opacity="0.39"/>
<path d="M83.0 39.7L86.5 34.1" stroke="#fff" stroke-width="1.8" opacity="0.33"/>
<circle cx="86.5" cy="34.1" r="1" fill="#fff" opacity="0.45"/>
<path d="M354.2 160.6L352.5 149.2" stroke="#fff" stroke-width="1.8" opacity="0.37"/>
<circle cx="352.5" cy="149.2" r="1" fill="#fff" opacity="0.49"/>
<path d="M28.8 125.1L34.0 114.0" stroke="#fff" stroke-width="1.8" opacity="0.36"/>
<circle cx="34.0" cy="114.0" r="1" fill="#fff" opacity="0.48"/>
<path d="M185.7 30.2L191.5 20.4" stroke="#fff" stroke-width="1.8" opacity="0.37"/>
<circle cx="191.5" cy="20.4" r="1" fill="#fff" opacity="0.49"/>
<path d="M382.7 73.0L379.8 62.7" stroke="#fff" stroke-width="1.8" opacity="0.35"/>
<circle cx="379.8" cy="62.7" r="1" fill="#fff" opacity="0.47"/>
<path d="M62.8 20.0L65.3 14.3" stroke="#fff" stroke-width="1.8" opacity="0.37"/>
<circle cx="65.3" cy="14.3" r="1" fill="#fff" opacity="0.49"/>
<path d="M53.3 157.8L59.0 146.3" stroke="#fff" stroke-width="1.8" opacity="0.26"/>
<circle cx="59.0" cy="146.3" r="1" fill="#fff" opacity="0.38"/>
<path d="M213.9 20.8L215.9 16.1" stroke="#fff" stroke-width="1.8" opacity="0.34"/>
<circle cx="215.9" cy="16.1" r="1" fill="#fff" opacity="0.46"/>
<path d="M205.1 178.9L208.5 171.2" stroke="#fff" stroke-width="1.8" opacity="0.38"/>
<circle cx="208.5" cy="171.2" r="1" fill="#fff" opacity="0.50"/>
<path d="M79.2 44.6L83.1 38.4" stroke="#fff" stroke-width="1.8" opacity="0.32"/>
<circle cx="83.1" cy="38.4" r="1" fill="#fff" opacity="0.44"/>
<path d="M98.5 77.5L100.9 72.0" stroke="#fff" stroke-width="1.8" opacity="0.26"/>
<circle cx="100.9" cy="72.0" r="1" fill="#fff" opacity="0.38"/>
<path d="M177.8 109.9L183.8 99.3" stroke="#fff" stroke-width="1.8" opacity="0.40"/>
<circle cx="183.8" cy="99.3" r="1" fill="#fff" opacity="0.52"/>
<path d="M195.2 99.8L200.4 92.2" stroke="#fff" stroke-width="1.8" opacity="0.29"/>
<circle cx="200.4" cy="92.2" r="1" fill="#fff" opacity="0.41"/>
<path d="M68.1 -4.2L74.2 -13.8" stroke="#fff" stroke-width="1.8" opacity="0.29"/>
<circle cx="74.2" cy="-13.8" r="1" fill="#fff" opacity="0.41"/>
<path d="M284.4 104.6L288.5 95.6" stroke="#fff" stroke-width="1.8" opacity="0.31"/>
<circle cx="288.5" cy="95.6" r="1" fill="#fff" opacity="0.43"/>
<path d="M307.9 15.9L303.9 4.2" stroke="#fff" stroke-width="1.8" opacity="0.25"/>
<circle cx="303.9" cy="4.2" r="1" fill="#fff" opacity="0.37"/>
<path d="M303.1 95.0L307.1 83.3" stroke="#fff" stroke-width="1.8" opacity="0.40"/>
<circle cx="307.1" cy="83.3" r="1" fill="#fff" opacity="0.52"/>
<path d="M171.9 115.7L176.1 107.7" stroke="#fff" stroke-width="1.8" opacity="0.35"/>
<circle cx="176.1" cy="107.7" r="1" fill="#fff" opacity="0.47"/>
<path d="M175.5 100.1L178.9 91.9" stroke="#fff" stroke-width="1.8" opacity="0.35"/>
<circle cx="178.9" cy="91.9" r="1" fill="#fff" opacity="0.47"/>
<path d="M344.7 180.6L343.7 171.5" stroke="#fff" stroke-width="1.8" opacity="0.41"/>
<circle cx="343.7" cy="171.5" r="1" fill="#fff" opacity="0.53"/>
<path d="M330.2 22.0L327.0 14.9" stroke="#fff" stroke-width="1.8" opacity="0.20"/>
<circle cx="327.0" cy="14.9" r="1" fill="#fff" opacity="0.32"/>
<path d="M91.0 9.4L95.4 0.0" stroke="#fff" stroke-width="1.8" opacity="0.40"/>
<circle cx="95.4" cy="0.0" r="1" fill="#fff" opacity="0.52"/>
<path d="M56.6 136.1L62.2 127.5" stroke="#fff" stroke-width="1.8" opacity="0.39"/>
<circle cx="62.2" cy="127.5" r="1" fill="#fff" opacity="0.51"/>
<path d="M381.1 38.3L374.8 23.1" stroke="#fff" stroke-width="1.8" opacity="0.30"/>
<circle cx="374.8" cy="23.1" r="1" fill="#fff" opacity="0.42"/>
<path d="M390.0 159.0L389.5 150.8" stroke="#fff" stroke-width="1.8" opacity="0.30"/>
<circle cx="389.5" cy="150.8" r="1" fill="#fff" opacity="0.42"/>
<path d="M130.3 33.6L133.6 26.8" stroke="#fff" stroke-width="1.8" opacity="0.18"/>
<circle cx="133.6" cy="26.8" r="1" fill="#fff" opacity="0.30"/>
<path d="M216.1 81.8L218.7 77.3" stroke="#fff" stroke-width="1.8" opacity="0.33"/>
<circle cx="218.7" cy="77.3" r="1" fill="#fff" opacity="0.45"/>
<path d="M199.4 7.7L204.8 -4.0" stroke="#fff" stroke-width="1.8" opacity="0.41"/>
<circle cx="204.8" cy="-4.0" r="1" fill="#fff" opacity="0.53"/>
<path d="M36.8 47.3L39.0 42.5" stroke="#fff" stroke-width="1.8" opacity="0.24"/>
<circle cx="39.0" cy="42.5" r="1" fill="#fff" opacity="0.36"/>
<path d="M46.7 78.2L51.8 67.0" stroke="#fff" stroke-width="1.8" opacity="0.24"/>
<circle cx="51.8" cy="67.0" r="1" fill="#fff" opacity="0.36"/>
<path d="M54.6 176.1L58.8 167.5" stroke="#fff" stroke-width="1.8" opacity="0.20"/>
<circle cx="58.8" cy="167.5" r="1" fill="#fff" opacity="0.32"/>
<path d="M18.0 130.6L22.7 123.6" stroke="#fff" stroke-width="1.8" opacity="0.41"/>
<circle cx="22.7" cy="123.6" r="1" fill="#fff" opacity="0.53"/>
<path d="M248.1 152.9L250.4 147.7" stroke="#fff" stroke-width="1.8" opacity="0.20"/>
<circle cx="250.4" cy="147.7" r="1" fill="#fff" opacity="0.32"/>
<path d="M339.2 84.4L338.2 74.4" stroke="#fff" stroke-width="1.8" opacity="0.40"/>
<circle cx="338.2" cy="74.4" r="1" fill="#fff" opacity="0.52"/>
<path d="M101.9 20.5L106.7 12.6" stroke="#fff" stroke-width="1.8" opacity="0.21"/>
<circle cx="106.7" cy="12.6" r="1" fill="#fff" opacity="0.33"/>
<path d="M59.4 4.9L62.8 -0.7" stroke="#fff" stroke-width="1.8" opacity="0.25"/>
<circle cx="62.8" cy="-0.7" r="1" fill="#fff" opacity="0.37"/>
<path d="M298.0 52.1L294.6 40.9" stroke="#fff" stroke-width="1.8" opacity="0.26"/>
<circle cx="294.6" cy="40.9" r="1" fill="#fff" opacity="0.38"/>
<path d="M2.2 44.3L4.5 39.7" stroke="#fff" stroke-width="1.8" opacity="0.31"/>
<circle cx="4.5" cy="39.7" r="1" fill="#fff" opacity="0.43"/>
<path d="M70.6 88.5L77.5 78.1" stroke="#fff" stroke-width="1.8" opacity="0.38"/>
<circle cx="77.5" cy="78.1" r="1" fill="#fff" opacity="0.50"/>
<path d="M167.4 92.5L173.3 82.4" stroke="#fff" stroke-width="1.8" opacity="0.30"/>
<circle cx="173.3" cy="82.4" r="1" fill="#fff" opacity="0.42"/>
<path d="M269.4 188.5L272.6 181.5" stroke="#fff" stroke-width="1.8" opacity="0.35"/>
<circle cx="272.6" cy="181.5" r="1" fill="#fff" opacity="0.47"/>
<path d="M248.8 74.7L254.7 66.5" stroke="#fff" stroke-width="1.8" opacity="0.21"/>
<circle cx="254.7" cy="66.5" r="1" fill="#fff" opacity="0.33"/>
<path d="M23.2 141.0L27.0 135.0" stroke="#fff" stroke-width="1.8" opacity="0.20"/>
<circle cx="27.0" cy="135.0" r="1" fill="#fff" opacity="0.32"/>
<path d="M330.7 166.5L330.7 153.0" stroke="#fff" stroke-width="1.8" opacity="0.24"/>
<circle cx="330.7" cy="153.0" r="1" fill="#fff" opacity="0.36"/>
<path d="M111.9 85.5L115.0 80.0" stroke="#fff" stroke-width="1.8" opacity="0.24"/>
<circle cx="115.0" cy="80.0" r="1" fill="#fff" opacity="0.36"/>
<path d="M378.8 186.6L379.0 174.4" stroke="#fff" stroke-width="1.8" opacity="0.41"/>
<circle cx="379.0" cy="174.4" r="1" fill="#fff" opacity="0.53"/>
<path d="M118.5 65.2L121.0 60.9" stroke="#fff" stroke-width="1.8" opacity="0.29"/>
<circle cx="121.0" cy="60.9" r="1" fill="#fff" opacity="0.41"/>
<path d="M195.6 34.6L200.8 27.2" stroke="#fff" stroke-width="1.8" opacity="0.24"/>
<circle cx="200.8" cy="27.2" r="1" fill="#fff" opacity="0.36"/>
<path d="M30.8 73.7L33.8 69.3" stroke="#fff" stroke-width="1.8" opacity="0.25"/>
<circle cx="33.8" cy="69.3" r="1" fill="#fff" opacity="0.37"/>
<path d="M87.9 110.4L91.8 102.0" stroke="#fff" stroke-width="1.8" opacity="0.34"/>
<circle cx="91.8" cy="102.0" r="1" fill="#fff" opacity="0.46"/>
<path d="M280.7 168.2L285.8 159.0" stroke="#fff" stroke-width="1.8" opacity="0.42"/>
<circle cx="285.8" cy="159.0" r="1" fill="#fff" opacity="0.54"/>
<path d="M54.6 137.7L60.4 129.3" stroke="#fff" stroke-width="1.8" opacity="0.38"/>
<circle cx="60.4" cy="129.3" r="1" fill="#fff" opacity="0.50"/>
<path d="M350.9 118.6L347.8 104.8" stroke="#fff" stroke-width="1.8" opacity="0.21"/>
<circle cx="347.8" cy="104.8" r="1" fill="#fff" opacity="0.33"/>
<path d="M204.0 94.4L208.8 83.7" stroke="#fff" stroke-width="1.8" opacity="0.38"/>
<circle cx="208.8" cy="83.7" r="1" fill="#fff" opacity="0.50"/>
<path d="M228.0 170.9L232.6 161.5" stroke="#fff" stroke-width="1.8" opacity="0.24"/>
<circle cx="232.6" cy="161.5" r="1" fill="#fff" opacity="0.36"/>
<path d="M7.4 21.2L11.8 14.7" stroke="#fff" stroke-width="1.8" opacity="0.38"/>
<circle cx="11.8" cy="14.7" r="1" fill="#fff" opacity="0.50"/>
<path d="M217.9 118.7L222.3 109.7" stroke="#fff" stroke-width="1.8" opacity="0.30"/>
<circle cx="222.3" cy="109.7" r="1" fill="#fff" opacity="0.42"/>
<path d="M-3.7 152.1L1.6 142.5" stroke="#fff" stroke-width="1.8" opacity="0.31"/>
<circle cx="1.6" cy="142.5" r="1" fill="#fff" opacity="0.43"/>
<path d="M258.1 8.0L253.4 -5.4" stroke="#fff" stroke-width="1.8" opacity="0.20"/>
<circle cx="253.4" cy="-5.4" r="1" fill="#fff" opacity="0.32"/>
<path d="M101.0 138.7L103.8 132.7" stroke="#fff" stroke-width="1.8" opacity="0.41"/>
<circle cx="103.8" cy="132.7" r="1" fill="#fff" opacity="0.53"/>
<path d="M192.1 70.4L196.0 62.4" stroke="#fff" stroke-width="1.8" opacity="0.36"/>
<circle cx="196.0" cy="62.4" r="1" fill="#fff" opacity="0.48"/>
<path d="M241.2 121.6L244.2 116.9" stroke="#fff" stroke-width="1.8" opacity="0.24"/>
<circle cx="244.2" cy="116.9" r="1" fill="#fff" opacity="0.36"/>
<path d="M291.5 55.0L288.7 42.9" stroke="#fff" stroke-width="1.8" opacity="0.19"/>
<circle cx="288.7" cy="42.9" r="1" fill="#fff" opacity="0.31"/>
<path d="M102.2 127.4L106.9 117.9" stroke="#fff" stroke-width="1.8" opacity="0.25"/>
<circle cx="106.9" cy="117.9" r="1" fill="#fff" opacity="0.37"/>
<path d="M201.1 86.5L205.9 79.3" stroke="#fff" stroke-width="1.8" opacity="0.39"/>
<circle cx="205.9" cy="79.3" r="1" fill="#fff" opacity="0.51"/>
<path d="M74.5 187.7L81.6 177.4" stroke="#fff" stroke-width="1.8" opacity="0.29"/>
<circle cx="81.6" cy="177.4" r="1" fill="#fff" opacity="0.41"/>
<path d="M322.1 185.7L322.2 174.5" stroke="#fff" stroke-width="1.8" opacity="0.23"/>
<circle cx="322.2" cy="174.5" r="1" fill="#fff" opacity="0.35"/>
<path d="M372.3 36.5L368.7 24.5" stroke="#fff" stroke-width="1.8" opacity="0.31"/>
<circle cx="368.7" cy="24.5" r="1" fill="#fff" opacity="0.43"/>
<path d="M375.1 21.1L368.7 7.5" stroke="#fff" stroke-width="1.8" opacity="0.39"/>
<circle cx="368.7" cy="7.5" r="1" fill="#fff" opacity="0.51"/>
<path d="M275.6 40.6L269.0 26.2" stroke="#fff" stroke-width="1.8" opacity="0.19"/>
<circle cx="269.0" cy="26.2" r="1" fill="#fff" opacity="0.31"/>
<path d="M-3.6 91.9L0.9 84.5" stroke="#fff" stroke-width="1.8" opacity="0.21"/>
<circle cx="0.9" cy="84.5" r="1" fill="#fff" opacity="0.33"/>
<path d="M132.2 57.3L139.0 47.7" stroke="#fff" stroke-width="1.8" opacity="0.36"/>
<circle cx="139.0" cy="47.7" r="1" fill="#fff" opacity="0.48"/>
<path d="M329.8 18.6L321.7 4.7" stroke="#fff" stroke-width="1.8" opacity="0.40"/>
<circle cx="321.7" cy="4.7" r="1" fill="#fff" opacity="0.52"/>
<path d="M110.6 68.3L113.7 60.8" stroke="#fff" stroke-width="1.8" opacity="0.32"/>
<circle cx="113.7" cy="60.8" r="1" fill="#fff" opacity="0.44"/>
<path d="M138.9 79.3L143.0 73.4" stroke="#fff" stroke-width="1.8" opacity="0.20"/>
<circle cx="143.0" cy="73.4" r="1" fill="#fff" opacity="0.32"/>
<path d="M328.0 51.3L322.8 35.9" stroke="#fff" stroke-width="1.8" opacity="0.24"/>
<circle cx="322.8" cy="35.9" r="1" fill="#fff" opacity="0.36"/>
<path d="M198.9 32.4L201.9 25.0" stroke="#fff" stroke-width="1.8" opacity="0.39"/>
<circle cx="201.9" cy="25.0" r="1" fill="#fff" opacity="0.51"/>
<path d="M319.0 119.3L323.0 103.8" stroke="#fff" stroke-width="1.8" opacity="0.31"/>
<circle cx="323.0" cy="103.8" r="1" fill="#fff" opacity="0.43"/>
<path d="M282.1 4.7L276.4 -8.2" stroke="#fff" stroke-width="1.8" opacity="0.36"/>
<circle cx="276.4" cy="-8.2" r="1" fill="#fff" opacity="0.48"/>
<path d="M252.2 51.4L248.1 45.7" stroke="#fff" stroke-width="1.8" opacity="0.21"/>
<circle cx="248.1" cy="45.7" r="1" fill="#fff" opacity="0.33"/>
<path d="M183.4 62.7L186.6 56.0" stroke="#fff" stroke-width="1.8" opacity="0.41"/>
<circle cx="186.6" cy="56.0" r="1" fill="#fff" opacity="0.53"/>
<path d="M98.8 124.2L102.3 117.7" stroke="#fff" stroke-width="1.8" opacity="0.27"/>
<circle cx="102.3" cy="117.7" r="1" fill="#fff" opacity="0.39"/>
<path d="M61.8 26.8L64.4 20.7" stroke="#fff" stroke-width="1.8" opacity="0.30"/>
<circle cx="64.4" cy="20.7" r="1" fill="#fff" opacity="0.42"/>
<path d="M82.8 173.5L89.1 162.2" stroke="#fff" stroke-width="1.8" opacity="0.21"/>
<circle cx="89.1" cy="162.2" r="1" fill="#fff" opacity="0.33"/>
<path d="M71.8 12.9L76.1 6.4" stroke="#fff" stroke-width="1.8" opacity="0.24"/>
<circle cx="76.1" cy="6.4" r="1" fill="#fff" opacity="0.36"/>
<path d="M98.1 107.2L103.2 96.3" stroke="#fff" stroke-width="1.8" opacity="0.28"/>
<circle cx="103.2" cy="96.3" r="1" fill="#fff" opacity="0.40"/>
<path d="M160.1 98.3L164.2 91.4" stroke="#fff" stroke-width="1.8" opacity="0.19"/>
<circle cx="164.2" cy="91.4" r="1" fill="#fff" opacity="0.31"/>
<path d="M105.7 185.6L108.6 180.4" stroke="#fff" stroke-width="1.8" opacity="0.33"/>
<circle cx="108.6" cy="180.4" r="1" fill="#fff" opacity="0.45"/>
<path d="M339.3 37.5L336.3 28.7" stroke="#fff" stroke-width="1.8" opacity="0.28"/>
<circle cx="336.3" cy="28.7" r="1" fill="#fff" opacity="0.40"/>
<path d="M172.9 182.9L177.6 172.1" stroke="#fff" stroke-width="1.8" opacity="0.19"/>
<circle cx="177.6" cy="172.1" r="1" fill="#fff" opacity="0.31"/>
<path d="M7.9 134.8L13.7 124.1" stroke="#fff" stroke-width="1.8" opacity="0.32"/>
<circle cx="13.7" cy="124.1" r="1" fill="#fff" opacity="0.44"/>
<path d="M-4.9 72.1L0.2 60.8" stroke="#fff" stroke-width="1.8" opacity="0.39"/>
<circle cx="0.2" cy="60.8" r="1" fill="#fff" opacity="0.51"/>
<path d="M382.9 43.9L380.7 36.6" stroke="#fff" stroke-width="1.8" opacity="0.31"/>
<circle cx="380.7" cy="36.6" r="1" fill="#fff" opacity="0.43"/>
<path d="M267.1 180.5L272.0 170.8" stroke="#fff" stroke-width="1.8" opacity="0.36"/>
<circle cx="272.0" cy="170.8" r="1" fill="#fff" opacity="0.48"/>
<path d="M177.5 103.6L179.7 98.8" stroke="#fff" stroke-width="1.8" opacity="0.24"/>
<circle cx="179.7" cy="98.8" r="1" fill="#fff" opacity="0.36"/>
<path d="M362.0 122.2L362.7 112.5" stroke="#fff" stroke-width="1.8" opacity="0.24"/>
<circle cx="362.7" cy="112.5" r="1" fill="#fff" opacity="0.36"/>
<path d="M248.9 132.6L252.2 127.7" stroke="#fff" stroke-width="1.8" opacity="0.31"/>
<circle cx="252.2" cy="127.7" r="1" fill="#fff" opacity="0.43"/>
<path d="M227.6 71.5L230.7 65.4" stroke="#fff" stroke-width="1.8" opacity="0.18"/>
<circle cx="230.7" cy="65.4" r="1" fill="#fff" opacity="0.30"/>
<path d="M115.3 85.8L121.0 74.4" stroke="#fff" stroke-width="1.8" opacity="0.39"/>
<circle cx="121.0" cy="74.4" r="1" fill="#fff" opacity="0.51"/>
<path d="M184.6 41.2L187.3 34.8" stroke="#fff" stroke-width="1.8" opacity="0.35"/>
<circle cx="187.3" cy="34.8" r="1" fill="#fff" opacity="0.47"/>
<path d="M117.7 -0.7L121.6 -8.8" stroke="#fff" stroke-width="1.8" opacity="0.28"/>
<circle cx="121.6" cy="-8.8" r="1" fill="#fff" opacity="0.40"/>
<path d="M97.6 126.5L104.2 116.0" stroke="#fff" stroke-width="1.8" opacity="0.19"/>
<circle cx="104.2" cy="116.0" r="1" fill="#fff" opacity="0.31"/>
<path d="M129.9 77.8L135.5 69.0" stroke="#fff" stroke-width="1.8" opacity="0.37"/>
<circle cx="135.5" cy="69.0" r="1" fill="#fff" opacity="0.49"/>
<path d="M289.9 94.5L292.0 86.1" stroke="#fff" stroke-width="1.8" opacity="0.25"/>
<circle cx="292.0" cy="86.1" r="1" fill="#fff" opacity="0.37"/>
<path d="M322.2 40.5L317.6 32.9" stroke="#fff" stroke-width="1.8" opacity="0.25"/>
<circle cx="317.6" cy="32.9" r="1" fill="#fff" opacity="0.37"/>
<path d="M374.8 92.7L375.1 84.2" stroke="#fff" stroke-width="1.8" opacity="0.28"/>
<circle cx="375.1" cy="84.2" r="1" fill="#fff" opacity="0.40"/>
<path d="M260.5 181.9L263.5 176.6" stroke="#fff" stroke-width="1.8" opacity="0.23"/>
<circle cx="263.5" cy="176.6" r="1" fill="#fff" opacity="0.35"/>
<path d="M383.7 23.0L381.9 16.1" stroke="#fff" stroke-width="1.8" opacity="0.27"/>
<circle cx="381.9" cy="16.1" r="1" fill="#fff" opacity="0.39"/>
<path d="M353.4 169.1L349.3 155.6" stroke="#fff" stroke-width="1.8" opacity="0.40"/>
<circle cx="349.3" cy="155.6" r="1" fill="#fff" opacity="0.52"/>
<path d="M126.4 31.5L131.7 20.3" stroke="#fff" stroke-width="1.8" opacity="0.19"/>
<circle cx="131.7" cy="20.3" r="1" fill="#fff" opacity="0.31"/>
<path d="M260.1 69.6L265.2 60.5" stroke="#fff" stroke-width="1.8" opacity="0.22"/>
<circle cx="265.2" cy="60.5" r="1" fill="#fff" opacity="0.34"/>
<path d="M-3.9 50.1L-0.9 42.9" stroke="#fff" stroke-width="1.8" opacity="0.21"/>
<circle cx="-0.9" cy="42.9" r="1" fill="#fff" opacity="0.33"/>
</g>
<text x="207" y="8" font-size="14" fill="#fff" text-anchor="middle" font-family="Liberation Sans" >Evanston</text>
<text x="207" y="25" font-size="14" fill="#fff" text-anchor="middle" font-family="Liberation Sans" >70°</text>
<text x="114" y="82" font-size="13.5" fill="#fff" text-anchor="middle" font-family="Liberation Sans" >Elmhurst</text>
<text x="114" y="98" font-size="13.5" fill="#fff" text-anchor="middle" font-family="Liberation Sans" >66°</text>
<text x="0" y="76" font-size="13" fill="#fff" text-anchor="start" font-family="Liberation Sans" >es</text>
<text x="64" y="184" font-size="13" fill="#fff" text-anchor="middle" font-family="Liberation Sans" >Bolingbrook</text>
<text x="195" y="178" font-size="13" fill="#fff" text-anchor="start" font-family="Liberation Sans" >wn</text>
<text x="235" y="74" font-size="13.5" fill="#fff" text-anchor="middle" font-family="Liberation Sans" text-decoration="underline">Chicago</text>
<path d="M209 76H261" stroke="#fff" stroke-width="1"/>
<circle cx="237" cy="88" r="9.5" fill="none" stroke="#d8e2ea" stroke-width="2.2"/><circle cx="237" cy="88" r="5" fill="#c9d3dc"/>
<circle cx="38" cy="22" r="10" fill="#c22a2a"/><path d="M34 16 Q33 25 37 28 M38 15 Q37 24 41 28 M42 20 Q43 26 40 28" stroke="#fff" stroke-width="1.6" fill="none" stroke-linecap="round"/>
<text x="52" y="28" font-size="16" font-weight="bold" fill="#fff" font-family="Liberation Sans">Windy<tspan font-size="10" font-weight="normal">.com</tspan></text>
<rect x="316" y="12.5" width="63" height="21" rx="10.5" fill="#48494e"/>
<text x="325.5" y="27.5" font-size="12.5" fill="#f3eadb" font-family="Liberation Sans">Wind</text>
<circle cx="368" cy="23" r="10.5" fill="#e09c12"/><path d="M362 21.5H369M362 24H368M364 26.5H368M368 21.5L371 19.5M368 24L371.5 23M368 26.5L370.5 28" stroke="#f3e2c0" stroke-width="1.6" stroke-linecap="round"/><circle cx="371" cy="19.5" r="1.2" fill="#f3e2c0"/><circle cx="371.5" cy="23" r="1.2" fill="#f3e2c0"/><circle cx="370.5" cy="28" r="1.2" fill="#f3e2c0"/>
<circle cx="367.5" cy="52.5" r="11" fill="#48494e"/><path d="M367.5 46.5V58.5M361.5 52.5H373.5" stroke="#fff" stroke-width="2.2"/>
<circle cx="367.5" cy="78" r="11" fill="#48494e"/><path d="M361.5 78H373.5" stroke="#fff" stroke-width="2.2"/>
<rect x="144" y="155" width="54" height="23" rx="5" fill="#e2a11c"/><path d="M164 177 L171 185 L178 177Z" fill="#e2a11c"/>
<text x="171" y="172" font-size="14" fill="#fff" text-anchor="middle" font-family="Liberation Sans">3 PM</text>
</svg>
<!--/WINDYMAP-->
<!--WINDYTABLE-->
<div class="a" style="left:1055px;top:775px;width:389px;height:197px;background:#f8f8f8"></div>
<div class="a" style="left:1055px;top:775px;width:389px;height:6px;background:#f3f3f3"></div>
<div class="a" style="left:1159px;top:775px;width:67px;height:6px;background:#e2e2e2;border-radius:3px 0 0 3px"></div>
<div class="a" style="left:1225.6px;top:775px;width:218.4px;height:6px;background:#656565"></div>
<div class="a" style="left:1225px;top:775px;width:2px;height:6px;background:#c0703a"></div>
<div class="a txt" style="left:1143px;top:787px;width:120px;text-align:center;font-size:15px;color:#444">Tuesday 1</div>
<div class="a txt" style="left:1312px;top:787px;width:120px;text-align:center;font-size:15px;color:#444">Wednesday 2</div>
<div class="a" style="left:1055px;top:813px;width:104px;height:159px;background:#e4e4e4"></div>
<div class="a" style="left:1281px;top:811px;width:99.5px;height:159px;background:#e9e9f3"></div>
<svg class="a" style="left:1159px;top:835px" width="285" height="78"><defs><linearGradient id="pk" x1="0" y1="0" x2="0" y2="1"><stop offset="0" stop-color="#f1c3e6" stop-opacity="1"/><stop offset="0.45" stop-color="#f4d2e4" stop-opacity="0.75"/><stop offset="1" stop-color="#fbeff0" stop-opacity="0.2"/></linearGradient></defs><path d="M0.0 22.8 L16.0 15.0 L47.0 8.5 L78.0 4.4 L109.0 8.5 L122.0 19.8 L141.0 27.0 L156.0 33.0 L172.0 39.0 L204.0 49.4 L235.0 47.0 L261.0 20.8 L285.0 5.5 L285 78 L0 78Z" fill="url(#pk)"/></svg>
<div class="a" style="left:1227.5px;top:811px;width:1.5px;height:17px;background:#e6a0a8"></div>
<div class="a" style="left:1315.5px;top:781px;width:1px;height:191px;background:#dedede"></div>
<div class="a txt" style="left:1055px;top:818.2px;width:70px;text-align:right;font-size:11px;color:#979797">Hours</div>
<svg class="a" style="left:1137px;top:818.7px" width="12" height="12"><circle cx="6" cy="6" r="5" fill="none" stroke="#555" stroke-width="1.1"/><path d="M6 3V6H8.5" fill="none" stroke="#555" stroke-width="1.1"/></svg>
<div class="a txt" style="left:1055px;top:871.3px;width:70px;text-align:right;font-size:11px;color:#979797">Temperature</div>
<div class="a txt" style="left:1133px;top:870.3px;width:20px;text-align:center;font-size:12.5px;color:#444">°F</div>
<div class="a txt" style="left:1055px;top:897.3px;width:70px;text-align:right;font-size:11px;color:#979797">Rain</div>
<div class="a txt" style="left:1133px;top:896.3px;width:20px;text-align:center;font-size:12.5px;color:#444">in</div>
<div class="a txt" style="left:1055px;top:917.7px;width:70px;text-align:right;font-size:11px;color:#979797">Wind</div>
<div class="a txt" style="left:1133px;top:916.7px;width:20px;text-align:center;font-size:12.5px;color:#444">kt</div>
<div class="a txt" style="left:1055px;top:936.1px;width:70px;text-align:right;font-size:11px;color:#979797">Wind gusts</div>
<div class="a txt" style="left:1133px;top:935.1px;width:20px;text-align:center;font-size:12.5px;color:#444">kt</div>
<div class="a txt" style="left:1055px;top:955.1px;width:70px;text-align:right;font-size:11px;color:#979797">Wind dir.</div>
<svg class="a" style="left:1137px;top:954.6px" width="12" height="13"><path d="M1.5 1V12" stroke="#444" stroke-width="1.2"/><path d="M2 1.5L10 3.5L8 6.5L2 6Z" fill="#444"/><path d="M4 2.5L4.5 5.8M6.5 3L7 6" stroke="#fff" stroke-width="1"/></svg>
<div class="a" style="left:1159px;top:913px;width:285px;height:19.5px;background:linear-gradient(90deg,#cfe9f6 5.5%, #efefef 16.7%, #efefef 27.4%, #efefef 38.5%, #8ad6f2 49.4%, #86d8f6 60.5%, #eeeeee 71.6%, #eeeeee 82.4%, #16c6f6 93.5%)"></div>
<div class="a" style="left:1159px;top:933px;width:285px;height:16px;background:linear-gradient(90deg,#00dc00 5.5%, #00dc00 16.7%, #00dc00 27.4%, #00e36a 38.5%, #00e05a 49.4%, #00dc20 60.5%, #00e38c 71.6%, #00d8a8 82.4%, #28dc00 93.5%)"></div>
<div class="a" style="left:1315.5px;top:913px;width:1px;height:36px;background:#d6d6d6"></div>
<div class="a txt" style="left:1154.8px;top:818px;width:40px;text-align:center;font-size:12.5px;color:#777">10<span style="font-size:8px">AM</span></div>
<div class="a txt" style="left:1154.8px;top:868px;width:40px;text-align:center;font-size:15px;color:#333">76°</div>
<div class="a txt" style="left:1164.8px;top:916px;width:20px;text-align:center;font-size:13.5px;color:#333">6</div>
<div class="a txt" style="left:1164.8px;top:936.5px;width:20px;text-align:center;font-size:9px;color:#245a24">12</div>
<svg class="a" style="left:1168.8px;top:955px" width="12" height="13"><path d="M6 1L11.2 7.2H8.2V12.2H3.8V7.2H0.8Z" fill="#4a7098" transform="rotate(12 6 7)"/></svg>
<svg class="a" style="left:1160.8px;top:837px" width="28" height="26"><path d="M15.3 10.0L18.5 10.0M14.5 13.1L17.2 14.8M12.2 15.5L13.8 18.2M9.0 16.3L9.0 19.5M5.9 15.5L4.3 18.2M3.5 13.1L0.8 14.8M2.7 10.0L-0.5 10.0M3.5 6.8L0.8 5.2M5.8 4.5L4.2 1.8M9.0 3.7L9.0 0.5M12.2 4.5L13.8 1.8M14.5 6.8L17.2 5.2" stroke="#f5b400" stroke-width="1.4"/><circle cx="9" cy="10" r="4.5" fill="#f5b400"/><path d="M7 23 Q4 23 4 20 Q4 17 7.5 17 Q9 12 14.5 12 Q20 12 21 16.5 Q26 16.5 26 20 Q26 23 23 23Z" fill="#a0a0a0"/></svg>
<div class="a txt" style="left:1186.5px;top:818px;width:40px;text-align:center;font-size:12.5px;color:#777">1<span style="font-size:8px">PM</span></div>
<div class="a txt" style="left:1186.5px;top:868px;width:40px;text-align:center;font-size:15px;color:#333">79°</div>
<div class="a txt" style="left:1196.5px;top:916px;width:20px;text-align:center;font-size:13.5px;color:#333">5</div>
<div class="a txt" style="left:1196.5px;top:936.5px;width:20px;text-align:center;font-size:9px;color:#245a24">12</div>
<svg class="a" style="left:1200.5px;top:955px" width="12" height="13"><path d="M6 1L11.2 7.2H8.2V12.2H3.8V7.2H0.8Z" fill="#4a7098" transform="rotate(-8 6 7)"/></svg>
<svg class="a" style="left:1192.5px;top:837px" width="28" height="26"><path d="M19.8 12.0L23.0 12.0M18.8 15.9L21.5 17.5M15.9 18.8L17.5 21.5M12.0 19.8L12.0 23.0M8.1 18.8L6.5 21.5M5.2 15.9L2.5 17.5M4.2 12.0L1.0 12.0M5.2 8.1L2.5 6.5M8.1 5.2L6.5 2.5M12.0 4.2L12.0 1.0M15.9 5.2L17.5 2.5M18.8 8.1L21.5 6.5" stroke="#f5b400" stroke-width="1.4"/><circle cx="12" cy="12" r="6" fill="#f5b400"/><path d="M13 22 Q11 22 11 19.5 Q11 17 14 17 Q15 14 18.5 14 Q22 14 23 17 Q26 17 26 19.5 Q26 22 24 22Z" fill="#a0a0a0"/></svg>
<div class="a txt" style="left:1217.0px;top:818px;width:40px;text-align:center;font-size:12.5px;color:#777">4<span style="font-size:8px">PM</span></div>
<div class="a txt" style="left:1217.0px;top:868px;width:40px;text-align:center;font-size:15px;color:#333">81°</div>
<div class="a txt" style="left:1227.0px;top:916px;width:20px;text-align:center;font-size:13.5px;color:#333">5</div>
<div class="a txt" style="left:1227.0px;top:936.5px;width:20px;text-align:center;font-size:9px;color:#245a24">12</div>
<svg class="a" style="left:1231.0px;top:955px" width="12" height="13"><path d="M6 1L11.2 7.2H8.2V12.2H3.8V7.2H0.8Z" fill="#4a7098" transform="rotate(0 6 7)"/></svg>
<svg class="a" style="left:1223.0px;top:837px" width="28" height="26"><path d="M19.8 12.0L23.0 12.0M18.8 15.9L21.5 17.5M15.9 18.8L17.5 21.5M12.0 19.8L12.0 23.0M8.1 18.8L6.5 21.5M5.2 15.9L2.5 17.5M4.2 12.0L1.0 12.0M5.2 8.1L2.5 6.5M8.1 5.2L6.5 2.5M12.0 4.2L12.0 1.0M15.9 5.2L17.5 2.5M18.8 8.1L21.5 6.5" stroke="#f5b400" stroke-width="1.4"/><circle cx="12" cy="12" r="6" fill="#f5b400"/><path d="M13 22 Q11 22 11 19.5 Q11 17 14 17 Q15 14 18.5 14 Q22 14 23 17 Q26 17 26 19.5 Q26 22 24 22Z" fill="#a0a0a0"/></svg>
<div class="a txt" style="left:1248.7px;top:818px;width:40px;text-align:center;font-size:12.5px;color:#777">7<span style="font-size:8px">PM</span></div>
<div class="a txt" style="left:1248.7px;top:868px;width:40px;text-align:center;font-size:15px;color:#333">80°</div>
<div class="a txt" style="left:1258.7px;top:916px;width:20px;text-align:center;font-size:13.5px;color:#333">3</div>
<div class="a txt" style="left:1258.7px;top:936.5px;width:20px;text-align:center;font-size:9px;color:#245a24">10</div>
<svg class="a" style="left:1262.7px;top:955px" width="12" height="13"><path d="M6 1L11.2 7.2H8.2V12.2H3.8V7.2H0.8Z" fill="#4a7098" transform="rotate(25 6 7)"/></svg>
<svg class="a" style="left:1254.7px;top:837px" width="28" height="26"><path d="M19.8 12.0L23.0 12.0M18.8 15.9L21.5 17.5M15.9 18.8L17.5 21.5M12.0 19.8L12.0 23.0M8.1 18.8L6.5 21.5M5.2 15.9L2.5 17.5M4.2 12.0L1.0 12.0M5.2 8.1L2.5 6.5M8.1 5.2L6.5 2.5M12.0 4.2L12.0 1.0M15.9 5.2L17.5 2.5M18.8 8.1L21.5 6.5" stroke="#f5b400" stroke-width="1.4"/><circle cx="12" cy="12" r="6" fill="#f5b400"/><path d="M13 22 Q11 22 11 19.5 Q11 17 14 17 Q15 14 18.5 14 Q22 14 23 17 Q26 17 26 19.5 Q26 22 24 22Z" fill="#a0a0a0"/></svg>
<div class="a txt" style="left:1279.8px;top:818px;width:40px;text-align:center;font-size:12.5px;color:#777">10<span style="font-size:8px">PM</span></div>
<div class="a txt" style="left:1279.8px;top:868px;width:40px;text-align:center;font-size:15px;color:#333">76°</div>
<div class="a txt" style="left:1289.8px;top:916px;width:20px;text-align:center;font-size:13.5px;color:#333">8</div>
<div class="a txt" style="left:1289.8px;top:936.5px;width:20px;text-align:center;font-size:9px;color:#245a24">11</div>
<svg class="a" style="left:1293.8px;top:955px" width="12" height="13"><path d="M6 1L11.2 7.2H8.2V12.2H3.8V7.2H0.8Z" fill="#4a7098" transform="rotate(-22 6 7)"/></svg>
<svg class="a" style="left:1285.8px;top:837px" width="28" height="26"><circle cx="11" cy="11" r="7" fill="none" stroke="#9cc0ef" stroke-width="1.2"/><path d="M13 22 Q11 22 11 19.5 Q11 17 14 17 Q15 14 18.5 14 Q22 14 23 17 Q26 17 26 19.5 Q26 22 24 22Z" fill="#a0a0a0"/></svg>
<div class="a txt" style="left:1311.5px;top:818px;width:40px;text-align:center;font-size:12.5px;color:#777">1<span style="font-size:8px">AM</span></div>
<div class="a txt" style="left:1311.5px;top:868px;width:40px;text-align:center;font-size:15px;color:#333">72°</div>
<div class="a txt" style="left:1321.5px;top:916px;width:20px;text-align:center;font-size:13.5px;color:#333">7</div>
<div class="a txt" style="left:1321.5px;top:936.5px;width:20px;text-align:center;font-size:9px;color:#245a24">11</div>
<svg class="a" style="left:1325.5px;top:955px" width="12" height="13"><path d="M6 1L11.2 7.2H8.2V12.2H3.8V7.2H0.8Z" fill="#4a7098" transform="rotate(8 6 7)"/></svg>
<svg class="a" style="left:1317.5px;top:837px" width="28" height="26"><circle cx="14" cy="13" r="8.5" fill="none" stroke="#9cc0ef" stroke-width="1.3"/></svg>
<div class="a txt" style="left:1343.0px;top:818px;width:40px;text-align:center;font-size:12.5px;color:#777">4<span style="font-size:8px">AM</span></div>
<div class="a txt" style="left:1343.0px;top:868px;width:40px;text-align:center;font-size:15px;color:#333">69°</div>
<div class="a txt" style="left:1353.0px;top:916px;width:20px;text-align:center;font-size:13.5px;color:#333">5</div>
<div class="a txt" style="left:1353.0px;top:936.5px;width:20px;text-align:center;font-size:9px;color:#245a24">10</div>
<svg class="a" style="left:1357.0px;top:955px" width="12" height="13"><path d="M6 1L11.2 7.2H8.2V12.2H3.8V7.2H0.8Z" fill="#4a7098" transform="rotate(15 6 7)"/></svg>
<svg class="a" style="left:1349.0px;top:837px" width="28" height="26"><circle cx="14" cy="13" r="8.5" fill="none" stroke="#9cc0ef" stroke-width="1.3"/></svg>
<div class="a txt" style="left:1373.8px;top:818px;width:40px;text-align:center;font-size:12.5px;color:#777">7<span style="font-size:8px">AM</span></div>
<div class="a txt" style="left:1373.8px;top:868px;width:40px;text-align:center;font-size:15px;color:#333">69°</div>
<div class="a txt" style="left:1383.8px;top:916px;width:20px;text-align:center;font-size:13.5px;color:#333">6</div>
<div class="a txt" style="left:1383.8px;top:936.5px;width:20px;text-align:center;font-size:9px;color:#245a24">9</div>
<svg class="a" style="left:1387.8px;top:955px" width="12" height="13"><path d="M6 1L11.2 7.2H8.2V12.2H3.8V7.2H0.8Z" fill="#4a7098" transform="rotate(12 6 7)"/></svg>
<svg class="a" style="left:1379.8px;top:837px" width="28" height="26"><path d="M22.8 13.0L26.0 13.0M21.6 17.4L24.4 19.0M18.4 20.6L20.0 23.4M14.0 21.8L14.0 25.0M9.6 20.6L8.0 23.4M6.4 17.4L3.6 19.0M5.2 13.0L2.0 13.0M6.4 8.6L3.6 7.0M9.6 5.4L8.0 2.6M14.0 4.2L14.0 1.0M18.4 5.4L20.0 2.6M21.6 8.6L24.4 7.0" stroke="#f5b400" stroke-width="1.4"/><circle cx="14" cy="13" r="7" fill="#f5b400"/></svg>
<div class="a txt" style="left:1405.4px;top:818px;width:40px;text-align:center;font-size:12.5px;color:#777">10<span style="font-size:8px">AM</span></div>
<div class="a txt" style="left:1405.4px;top:868px;width:40px;text-align:center;font-size:15px;color:#333">77°</div>
<div class="a txt" style="left:1415.4px;top:916px;width:20px;text-align:center;font-size:13.5px;color:#333">8</div>
<div class="a txt" style="left:1415.4px;top:936.5px;width:20px;text-align:center;font-size:9px;color:#245a24">14</div>
<svg class="a" style="left:1419.4px;top:955px" width="12" height="13"><path d="M6 1L11.2 7.2H8.2V12.2H3.8V7.2H0.8Z" fill="#4a7098" transform="rotate(0 6 7)"/></svg>
<svg class="a" style="left:1411.4px;top:837px" width="28" height="26"><path d="M22.8 13.0L26.0 13.0M21.6 17.4L24.4 19.0M18.4 20.6L20.0 23.4M14.0 21.8L14.0 25.0M9.6 20.6L8.0 23.4M6.4 17.4L3.6 19.0M5.2 13.0L2.0 13.0M6.4 8.6L3.6 7.0M9.6 5.4L8.0 2.6M14.0 4.2L14.0 1.0M18.4 5.4L20.0 2.6M21.6 8.6L24.4 7.0" stroke="#f5b400" stroke-width="1.4"/><circle cx="14" cy="13" r="7" fill="#f5b400"/></svg>
<!--/WINDYTABLE-->
</body></html>
